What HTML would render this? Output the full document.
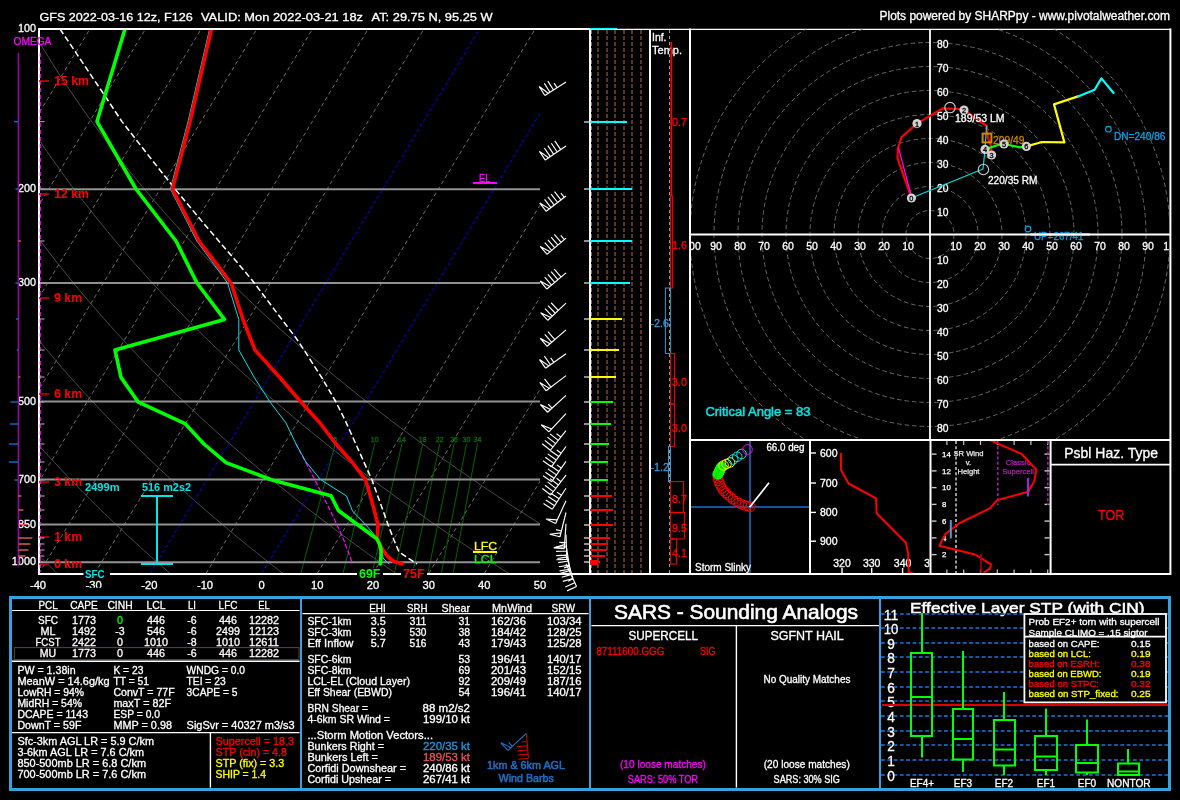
<!DOCTYPE html>
<html><head><meta charset="utf-8"><title>SHARPpy sounding</title>
<style>html,body{margin:0;padding:0;background:#000;overflow:hidden}svg{display:block;will-change:transform}text{font-family:"Liberation Sans",sans-serif}</style></head><body>
<svg width="1180" height="800" viewBox="0 0 1180 800">
<rect width="1180" height="800" fill="#000"/>
<text x="39.4" y="20.7" font-size="11.6" fill="#fff" textLength="153.4" lengthAdjust="spacingAndGlyphs" stroke="#fff" stroke-width="0.3">GFS 2022-03-16 12z, F126</text>
<text x="201.0" y="20.7" font-size="11.6" fill="#fff" textLength="162.0" lengthAdjust="spacingAndGlyphs" stroke="#fff" stroke-width="0.3">VALID: Mon 2022-03-21 18z</text>
<text x="371.6" y="20.7" font-size="11.6" fill="#fff" textLength="121.0" lengthAdjust="spacingAndGlyphs" stroke="#fff" stroke-width="0.3">AT: 29.75 N, 95.25 W</text>
<text x="879.5" y="19.7" font-size="12" fill="#fff" textLength="290.5" lengthAdjust="spacingAndGlyphs" stroke="#fff" stroke-width="0.3">Plots powered by SHARPpy - www.pivotalweather.com</text>
<clipPath id="cs"><rect x="39" y="29" width="501" height="545"/></clipPath>
<g clip-path="url(#cs)">
<path d="M57.2,573.5 L55.0,571.3 L52.7,569.0 L50.4,566.8 L48.1,564.5 L45.8,562.2 L43.5,559.9 L41.2,557.5 L38.9,555.1 L36.5,552.7 L34.1,550.3 L31.8,547.9 L29.4,545.4 L27.0,542.9 L24.5,540.3 L22.1,537.8 L19.7,535.2 L17.2,532.6 L14.7,529.9 L12.2,527.2 L9.7,524.5 L7.2,521.8 L4.7,519.0 L2.1,516.2 L-0.5,513.4 L-3.1,510.5 L-5.7,507.6 L-8.3,504.6 L-10.9,501.6 L-13.6,498.6 L-16.3,495.5 L-19.0,492.4 L-21.7,489.2 L-24.4,486.1 L-27.2,482.8 L-29.9,479.5 L-32.7,476.2 L-35.5,472.8 L-38.4,469.4 L-41.2,465.9 L-44.1,462.3 L-47.0,458.8 L-49.9,455.1 L-52.9,451.4 L-55.8,447.6 L-58.8,443.8 L-61.8,439.9 L-64.9,435.9 L-68.0,431.9 L-71.0,427.8 L-74.2,423.6 L-77.3,419.4 L-80.5,415.0 L-83.7,410.6 L-86.9,406.1 L-90.2,401.5 L-93.5,396.9 L-96.8,392.1 L-100.2,387.2 L-103.6,382.2 L-107.0,377.1 L-110.5,371.9 L-114.0,366.6 L-117.5,361.1 L-121.1,355.5 L-124.7,349.8 L-128.3,343.9 L-132.0,337.9 L-135.8,331.7 L-139.6,325.4 L-143.4,318.9 L-147.2,312.1 L-151.2,305.2 L-155.1,298.1 L-159.1,290.7 L-163.2,283.1 L-167.3,275.3 L-171.5,267.1 L-175.7,258.7 L-180.0,250.0 L-184.4,240.9 L-188.8,231.4 L-193.2,221.6 L-197.8,211.2 L-202.4,200.5 L-207.0,189.2 L-211.8,177.3 L-216.6,164.7 L-221.4,151.5 L-226.4,137.4 L-231.4,122.5 L-236.4,106.5 L-241.6,89.3 L-246.7,70.8 L-251.9,50.6 L-257.1,28.5" fill="none" stroke="#505050" stroke-width="0.9"/>
<path d="M170.1,573.5 L167.6,571.3 L165.0,569.0 L162.4,566.8 L159.8,564.5 L157.2,562.2 L154.5,559.9 L151.9,557.5 L149.2,555.1 L146.6,552.7 L143.9,550.3 L141.1,547.9 L138.4,545.4 L135.7,542.9 L132.9,540.3 L130.1,537.8 L127.4,535.2 L124.5,532.6 L121.7,529.9 L118.9,527.2 L116.0,524.5 L113.1,521.8 L110.2,519.0 L107.3,516.2 L104.4,513.4 L101.4,510.5 L98.4,507.6 L95.4,504.6 L92.4,501.6 L89.4,498.6 L86.3,495.5 L83.2,492.4 L80.1,489.2 L77.0,486.1 L73.8,482.8 L70.6,479.5 L67.4,476.2 L64.2,472.8 L60.9,469.4 L57.7,465.9 L54.3,462.3 L51.0,458.8 L47.6,455.1 L44.3,451.4 L40.8,447.6 L37.4,443.8 L33.9,439.9 L30.4,435.9 L26.9,431.9 L23.3,427.8 L19.7,423.6 L16.0,419.4 L12.4,415.0 L8.7,410.6 L4.9,406.1 L1.1,401.5 L-2.7,396.9 L-6.6,392.1 L-10.5,387.2 L-14.4,382.2 L-18.4,377.1 L-22.4,371.9 L-26.5,366.6 L-30.6,361.1 L-34.8,355.5 L-39.0,349.8 L-43.3,343.9 L-47.6,337.9 L-52.0,331.7 L-56.4,325.4 L-60.9,318.9 L-65.4,312.1 L-70.1,305.2 L-74.7,298.1 L-79.5,290.7 L-84.3,283.1 L-89.2,275.3 L-94.1,267.1 L-99.1,258.7 L-104.2,250.0 L-109.4,240.9 L-114.7,231.4 L-120.1,221.6 L-125.5,211.2 L-131.1,200.5 L-136.7,189.2 L-142.5,177.3 L-148.4,164.7 L-154.3,151.5 L-160.4,137.4 L-166.6,122.5 L-173.0,106.5 L-179.4,89.3 L-186.0,70.8 L-192.7,50.6 L-199.5,28.5" fill="none" stroke="#505050" stroke-width="0.9"/>
<path d="M283.0,573.5 L280.1,571.3 L277.3,569.0 L274.4,566.8 L271.4,564.5 L268.5,562.2 L265.6,559.9 L262.6,557.5 L259.6,555.1 L256.6,552.7 L253.6,550.3 L250.5,547.9 L247.5,545.4 L244.4,542.9 L241.3,540.3 L238.2,537.8 L235.0,535.2 L231.9,532.6 L228.7,529.9 L225.5,527.2 L222.3,524.5 L219.0,521.8 L215.8,519.0 L212.5,516.2 L209.2,513.4 L205.9,510.5 L202.5,507.6 L199.1,504.6 L195.7,501.6 L192.3,498.6 L188.8,495.5 L185.4,492.4 L181.9,489.2 L178.3,486.1 L174.8,482.8 L171.2,479.5 L167.6,476.2 L163.9,472.8 L160.2,469.4 L156.5,465.9 L152.8,462.3 L149.0,458.8 L145.2,455.1 L141.4,451.4 L137.5,447.6 L133.6,443.8 L129.7,439.9 L125.7,435.9 L121.7,431.9 L117.6,427.8 L113.5,423.6 L109.4,419.4 L105.2,415.0 L101.0,410.6 L96.8,406.1 L92.5,401.5 L88.1,396.9 L83.7,392.1 L79.3,387.2 L74.8,382.2 L70.2,377.1 L65.6,371.9 L61.0,366.6 L56.3,361.1 L51.5,355.5 L46.7,349.8 L41.8,343.9 L36.8,337.9 L31.8,331.7 L26.7,325.4 L21.6,318.9 L16.4,312.1 L11.1,305.2 L5.7,298.1 L0.2,290.7 L-5.3,283.1 L-11.0,275.3 L-16.7,267.1 L-22.5,258.7 L-28.5,250.0 L-34.5,240.9 L-40.7,231.4 L-46.9,221.6 L-53.3,211.2 L-59.8,200.5 L-66.4,189.2 L-73.2,177.3 L-80.1,164.7 L-87.2,151.5 L-94.5,137.4 L-101.9,122.5 L-109.5,106.5 L-117.3,89.3 L-125.2,70.8 L-133.4,50.6 L-141.8,28.5" fill="none" stroke="#505050" stroke-width="0.9"/>
<path d="M395.9,573.5 L392.7,571.3 L389.5,569.0 L386.3,566.8 L383.1,564.5 L379.8,562.2 L376.6,559.9 L373.3,557.5 L370.0,555.1 L366.6,552.7 L363.3,550.3 L359.9,547.9 L356.5,545.4 L353.1,542.9 L349.7,540.3 L346.2,537.8 L342.7,535.2 L339.2,532.6 L335.7,529.9 L332.1,527.2 L328.6,524.5 L325.0,521.8 L321.3,519.0 L317.7,516.2 L314.0,513.4 L310.3,510.5 L306.6,507.6 L302.8,504.6 L299.0,501.6 L295.2,498.6 L291.4,495.5 L287.5,492.4 L283.6,489.2 L279.7,486.1 L275.7,482.8 L271.7,479.5 L267.7,476.2 L263.6,472.8 L259.5,469.4 L255.4,465.9 L251.2,462.3 L247.0,458.8 L242.8,455.1 L238.5,451.4 L234.2,447.6 L229.8,443.8 L225.4,439.9 L221.0,435.9 L216.5,431.9 L212.0,427.8 L207.4,423.6 L202.8,419.4 L198.1,415.0 L193.4,410.6 L188.6,406.1 L183.8,401.5 L178.9,396.9 L174.0,392.1 L169.0,387.2 L164.0,382.2 L158.9,377.1 L153.7,371.9 L148.5,366.6 L143.2,361.1 L137.8,355.5 L132.4,349.8 L126.9,343.9 L121.3,337.9 L115.6,331.7 L109.9,325.4 L104.1,318.9 L98.2,312.1 L92.2,305.2 L86.1,298.1 L79.9,290.7 L73.6,283.1 L67.2,275.3 L60.7,267.1 L54.0,258.7 L47.3,250.0 L40.4,240.9 L33.4,231.4 L26.2,221.6 L18.9,211.2 L11.5,200.5 L3.9,189.2 L-3.9,177.3 L-11.9,164.7 L-20.1,151.5 L-28.5,137.4 L-37.1,122.5 L-46.0,106.5 L-55.1,89.3 L-64.5,70.8 L-74.1,50.6 L-84.1,28.5" fill="none" stroke="#505050" stroke-width="0.9"/>
<path d="M508.8,573.5 L505.3,571.3 L501.8,569.0 L498.3,566.8 L494.7,564.5 L491.2,562.2 L487.6,559.9 L484.0,557.5 L480.3,555.1 L476.7,552.7 L473.0,550.3 L469.3,547.9 L465.6,545.4 L461.8,542.9 L458.0,540.3 L454.2,537.8 L450.4,535.2 L446.6,532.6 L442.7,529.9 L438.8,527.2 L434.9,524.5 L430.9,521.8 L426.9,519.0 L422.9,516.2 L418.8,513.4 L414.8,510.5 L410.7,507.6 L406.5,504.6 L402.4,501.6 L398.2,498.6 L393.9,495.5 L389.7,492.4 L385.4,489.2 L381.0,486.1 L376.7,482.8 L372.3,479.5 L367.8,476.2 L363.3,472.8 L358.8,469.4 L354.3,465.9 L349.7,462.3 L345.0,458.8 L340.3,455.1 L335.6,451.4 L330.8,447.6 L326.0,443.8 L321.2,439.9 L316.3,435.9 L311.3,431.9 L306.3,427.8 L301.2,423.6 L296.1,419.4 L291.0,415.0 L285.7,410.6 L280.5,406.1 L275.1,401.5 L269.7,396.9 L264.3,392.1 L258.7,387.2 L253.1,382.2 L247.5,377.1 L241.7,371.9 L235.9,366.6 L230.1,361.1 L224.1,355.5 L218.1,349.8 L211.9,343.9 L205.7,337.9 L199.4,331.7 L193.0,325.4 L186.6,318.9 L180.0,312.1 L173.3,305.2 L166.5,298.1 L159.5,290.7 L152.5,283.1 L145.3,275.3 L138.1,267.1 L130.6,258.7 L123.1,250.0 L115.3,240.9 L107.5,231.4 L99.4,221.6 L91.2,211.2 L82.8,200.5 L74.1,189.2 L65.3,177.3 L56.3,164.7 L47.0,151.5 L37.4,137.4 L27.6,122.5 L17.5,106.5 L7.1,89.3 L-3.7,70.8 L-14.9,50.6 L-26.5,28.5" fill="none" stroke="#505050" stroke-width="0.9"/>
<path d="M621.7,573.5 L617.9,571.3 L614.1,569.0 L610.3,566.8 L606.4,564.5 L602.5,562.2 L598.6,559.9 L594.7,557.5 L590.7,555.1 L586.7,552.7 L582.7,550.3 L578.7,547.9 L574.6,545.4 L570.5,542.9 L566.4,540.3 L562.3,537.8 L558.1,535.2 L553.9,532.6 L549.7,529.9 L545.4,527.2 L541.1,524.5 L536.8,521.8 L532.5,519.0 L528.1,516.2 L523.7,513.4 L519.2,510.5 L514.8,507.6 L510.2,504.6 L505.7,501.6 L501.1,498.6 L496.5,495.5 L491.8,492.4 L487.1,489.2 L482.4,486.1 L477.6,482.8 L472.8,479.5 L468.0,476.2 L463.1,472.8 L458.1,469.4 L453.1,465.9 L448.1,462.3 L443.0,458.8 L437.9,455.1 L432.7,451.4 L427.5,447.6 L422.2,443.8 L416.9,439.9 L411.6,435.9 L406.1,431.9 L400.6,427.8 L395.1,423.6 L389.5,419.4 L383.8,415.0 L378.1,410.6 L372.3,406.1 L366.4,401.5 L360.5,396.9 L354.5,392.1 L348.5,387.2 L342.3,382.2 L336.1,377.1 L329.8,371.9 L323.4,366.6 L317.0,361.1 L310.4,355.5 L303.8,349.8 L297.0,343.9 L290.2,337.9 L283.2,331.7 L276.2,325.4 L269.0,318.9 L261.8,312.1 L254.4,305.2 L246.9,298.1 L239.2,290.7 L231.4,283.1 L223.5,275.3 L215.4,267.1 L207.2,258.7 L198.8,250.0 L190.3,240.9 L181.5,231.4 L172.6,221.6 L163.4,211.2 L154.0,200.5 L144.4,189.2 L134.6,177.3 L124.5,164.7 L114.1,151.5 L103.4,137.4 L92.4,122.5 L81.0,106.5 L69.2,89.3 L57.0,70.8 L44.4,50.6 L31.2,28.5" fill="none" stroke="#505050" stroke-width="0.9"/>
<line x1="-629.0" y1="573.5" x2="-299.5" y2="28.5" stroke="#6a6a6a" stroke-width="1" stroke-dasharray="4 3"/>
<line x1="-573.3" y1="573.5" x2="-243.8" y2="28.5" stroke="#6a6a6a" stroke-width="1" stroke-dasharray="4 3"/>
<line x1="-517.7" y1="573.5" x2="-188.2" y2="28.5" stroke="#6a6a6a" stroke-width="1" stroke-dasharray="4 3"/>
<line x1="-462.0" y1="573.5" x2="-132.5" y2="28.5" stroke="#6a6a6a" stroke-width="1" stroke-dasharray="4 3"/>
<line x1="-406.3" y1="573.5" x2="-76.8" y2="28.5" stroke="#6a6a6a" stroke-width="1" stroke-dasharray="4 3"/>
<line x1="-350.7" y1="573.5" x2="-21.2" y2="28.5" stroke="#6a6a6a" stroke-width="1" stroke-dasharray="4 3"/>
<line x1="-295.0" y1="573.5" x2="34.5" y2="28.5" stroke="#6a6a6a" stroke-width="1" stroke-dasharray="4 3"/>
<line x1="-239.3" y1="573.5" x2="90.2" y2="28.5" stroke="#6a6a6a" stroke-width="1" stroke-dasharray="4 3"/>
<line x1="-183.7" y1="573.5" x2="145.8" y2="28.5" stroke="#6a6a6a" stroke-width="1" stroke-dasharray="4 3"/>
<line x1="-128.0" y1="573.5" x2="201.5" y2="28.5" stroke="#6a6a6a" stroke-width="1" stroke-dasharray="4 3"/>
<line x1="-72.3" y1="573.5" x2="257.2" y2="28.5" stroke="#6a6a6a" stroke-width="1" stroke-dasharray="4 3"/>
<line x1="-16.7" y1="573.5" x2="312.8" y2="28.5" stroke="#6a6a6a" stroke-width="1" stroke-dasharray="4 3"/>
<line x1="39.0" y1="573.5" x2="368.5" y2="28.5" stroke="#6a6a6a" stroke-width="1" stroke-dasharray="4 3"/>
<line x1="94.7" y1="573.5" x2="424.2" y2="28.5" stroke="#6a6a6a" stroke-width="1" stroke-dasharray="4 3"/>
<line x1="150.3" y1="573.5" x2="479.8" y2="28.5" stroke="#0000ff" stroke-width="1" stroke-dasharray="3.5 2.5"/>
<line x1="206.0" y1="573.5" x2="535.5" y2="28.5" stroke="#6a6a6a" stroke-width="1" stroke-dasharray="4 3"/>
<line x1="261.7" y1="573.5" x2="591.2" y2="28.5" stroke="#0000ff" stroke-width="1" stroke-dasharray="3.5 2.5"/>
<line x1="317.3" y1="573.5" x2="646.8" y2="28.5" stroke="#6a6a6a" stroke-width="1" stroke-dasharray="4 3"/>
<line x1="373.0" y1="573.5" x2="702.5" y2="28.5" stroke="#6a6a6a" stroke-width="1" stroke-dasharray="4 3"/>
<line x1="428.7" y1="573.5" x2="758.2" y2="28.5" stroke="#6a6a6a" stroke-width="1" stroke-dasharray="4 3"/>
<line x1="484.3" y1="573.5" x2="813.8" y2="28.5" stroke="#6a6a6a" stroke-width="1" stroke-dasharray="4 3"/>
<line x1="540.0" y1="573.5" x2="869.5" y2="28.5" stroke="#6a6a6a" stroke-width="1" stroke-dasharray="4 3"/>
</g>
<line x1="300.8" y1="573.5" x2="335.2" y2="443.8" stroke="#006400" stroke-width="1"/>
<text x="335.2" y="441.8" font-size="7" fill="#007000" text-anchor="middle" stroke="#007000" stroke-width="0.3">6</text>
<line x1="343.0" y1="573.5" x2="374.7" y2="443.8" stroke="#006400" stroke-width="1"/>
<text x="374.7" y="441.8" font-size="7" fill="#007000" text-anchor="middle" stroke="#007000" stroke-width="0.3">10</text>
<line x1="372.0" y1="573.5" x2="401.9" y2="443.8" stroke="#006400" stroke-width="1"/>
<text x="401.9" y="441.8" font-size="7" fill="#007000" text-anchor="middle" stroke="#007000" stroke-width="0.3">14</text>
<line x1="394.3" y1="573.5" x2="422.7" y2="443.8" stroke="#006400" stroke-width="1"/>
<text x="422.7" y="441.8" font-size="7" fill="#007000" text-anchor="middle" stroke="#007000" stroke-width="0.3">18</text>
<line x1="412.5" y1="573.5" x2="439.7" y2="443.8" stroke="#006400" stroke-width="1"/>
<text x="439.7" y="441.8" font-size="7" fill="#007000" text-anchor="middle" stroke="#007000" stroke-width="0.3">22</text>
<line x1="427.9" y1="573.5" x2="454.1" y2="443.8" stroke="#006400" stroke-width="1"/>
<text x="454.1" y="441.8" font-size="7" fill="#007000" text-anchor="middle" stroke="#007000" stroke-width="0.3">26</text>
<line x1="441.3" y1="573.5" x2="466.5" y2="443.8" stroke="#006400" stroke-width="1"/>
<text x="466.5" y="441.8" font-size="7" fill="#007000" text-anchor="middle" stroke="#007000" stroke-width="0.3">30</text>
<line x1="453.1" y1="573.5" x2="477.5" y2="443.8" stroke="#006400" stroke-width="1"/>
<text x="477.5" y="441.8" font-size="7" fill="#007000" text-anchor="middle" stroke="#007000" stroke-width="0.3">34</text>
<line x1="39.0" y1="562.2" x2="540.0" y2="562.2" stroke="#929292" stroke-width="2"/>
<line x1="39.0" y1="524.5" x2="540.0" y2="524.5" stroke="#929292" stroke-width="2"/>
<line x1="39.0" y1="479.5" x2="540.0" y2="479.5" stroke="#929292" stroke-width="2"/>
<line x1="39.0" y1="401.5" x2="540.0" y2="401.5" stroke="#929292" stroke-width="2"/>
<line x1="39.0" y1="283.1" x2="540.0" y2="283.1" stroke="#929292" stroke-width="2"/>
<line x1="39.0" y1="189.2" x2="540.0" y2="189.2" stroke="#929292" stroke-width="2"/>
<g clip-path="url(#cs)" stroke-linejoin="round" stroke-linecap="round">
<path d="M296.0,444.0 L306.0,463.0 L315.0,480.0 L323.0,496.0 L330.0,510.0 L337.0,525.0 L343.0,538.0 L352.0,562.0" fill="none" stroke="#ff00ff" stroke-width="1.2" stroke-dasharray="4 3"/>
<path d="M209.6,29.0 L188.0,121.6 L170.4,189.0 L196.8,241.0 L227.6,283.0 L238.8,319.5 L238.8,350.0 L254.0,377.0 L270.0,402.0 L286.0,423.0 L296.0,444.0 L306.0,462.0 L320.5,479.5 L346.5,496.0 L352.5,511.0 L366.0,525.0 L377.0,538.0 L379.5,544.0 L381.0,550.0 L383.0,558.0 L389.0,564.0" fill="none" stroke="#00e5e5" stroke-width="1"/>
<path d="M60.0,29.0 L105.0,96.0 L122.0,121.6 L152.0,160.0 L175.0,189.0 L205.0,225.0 L236.0,261.0 L252.0,280.0 L277.0,313.0 L296.0,338.0 L304.0,350.0 L322.0,378.0 L336.0,402.0 L345.0,420.0 L354.0,440.0 L363.0,460.0 L372.0,480.0 L381.0,505.0 L388.0,524.6 L394.0,540.0 L399.0,552.0 L417.0,564.0" fill="none" stroke="#fff" stroke-width="1.5" stroke-dasharray="6 3" stroke-linecap="butt"/>
<path d="M211.4,29.0 L190.0,121.6 L172.4,189.0 L199.0,241.0 L231.0,283.0 L243.0,319.5 L255.0,350.0 L279.4,377.0 L301.0,402.0 L320.0,423.0 L336.0,444.0 L352.0,462.0 L365.6,480.0 L370.3,496.0 L374.2,510.0 L378.0,525.0 L377.2,538.0 L379.5,544.0 L383.0,550.0 L387.5,556.5 L394.0,561.5 L402.0,563.8" fill="none" stroke="#ff0000" stroke-width="3.6"/>
<path d="M125.0,29.0 L97.0,121.6 L136.0,189.0 L176.0,241.0 L197.0,283.0 L224.4,319.4 L115.0,350.0 L121.0,377.4 L138.0,401.8 L185.0,423.6 L204.0,444.0 L226.0,462.6 L272.0,480.0 L331.0,495.8 L338.4,510.5 L358.0,525.0 L376.5,538.5 L379.5,544.0 L381.0,550.0 L381.0,556.0 L380.5,562.0 L380.4,564.0" fill="none" stroke="#00ff00" stroke-width="3.6"/>
</g>
<line x1="38.0" y1="29.0" x2="590.8" y2="29.0" stroke="#fff" stroke-width="2"/>
<line x1="39.0" y1="28.0" x2="39.0" y2="575.0" stroke="#fff" stroke-width="2"/>
<line x1="38.0" y1="574.0" x2="590.8" y2="574.0" stroke="#fff" stroke-width="2"/>
<line x1="590.0" y1="28.0" x2="590.0" y2="575.0" stroke="#fff" stroke-width="2"/>
<line x1="590.0" y1="29.4" x2="1171.0" y2="29.4" stroke="#fff" stroke-width="1.3"/>
<line x1="590.0" y1="28.6" x2="617.0" y2="28.6" stroke="#00ffff" stroke-width="1.4"/>
<text x="36.0" y="31.6" font-size="11.3" fill="#fff" text-anchor="end" textLength="18.0" lengthAdjust="spacingAndGlyphs" stroke="#fff" stroke-width="0.3">100</text>
<text x="36.0" y="192.3" font-size="11.3" fill="#fff" text-anchor="end" textLength="18.0" lengthAdjust="spacingAndGlyphs" stroke="#fff" stroke-width="0.3">200</text>
<text x="36.0" y="286.2" font-size="11.3" fill="#fff" text-anchor="end" textLength="18.0" lengthAdjust="spacingAndGlyphs" stroke="#fff" stroke-width="0.3">300</text>
<text x="36.0" y="404.6" font-size="11.3" fill="#fff" text-anchor="end" textLength="18.0" lengthAdjust="spacingAndGlyphs" stroke="#fff" stroke-width="0.3">500</text>
<text x="36.0" y="482.6" font-size="11.3" fill="#fff" text-anchor="end" textLength="18.0" lengthAdjust="spacingAndGlyphs" stroke="#fff" stroke-width="0.3">700</text>
<text x="36.0" y="527.6" font-size="11.3" fill="#fff" text-anchor="end" textLength="18.0" lengthAdjust="spacingAndGlyphs" stroke="#fff" stroke-width="0.3">850</text>
<text x="36.0" y="565.3" font-size="11.3" fill="#fff" text-anchor="end" textLength="24.2" lengthAdjust="spacingAndGlyphs" stroke="#fff" stroke-width="0.3">1000</text>
<clipPath id="c30"><rect x="80" y="575" width="32" height="12.7"/></clipPath>
<text x="38.0" y="588.9" font-size="11.2" fill="#fff" text-anchor="middle" stroke="#fff" stroke-width="0.3">-40</text>
<text x="93.7" y="588.9" font-size="11.2" fill="#fff" text-anchor="middle" stroke="#fff" stroke-width="0.3" clip-path="url(#c30)">-30</text>
<text x="149.3" y="588.9" font-size="11.2" fill="#fff" text-anchor="middle" stroke="#fff" stroke-width="0.3">-20</text>
<text x="205.0" y="588.9" font-size="11.2" fill="#fff" text-anchor="middle" stroke="#fff" stroke-width="0.3">-10</text>
<text x="261.7" y="588.9" font-size="11.2" fill="#fff" text-anchor="middle" stroke="#fff" stroke-width="0.3">0</text>
<text x="317.3" y="588.9" font-size="11.2" fill="#fff" text-anchor="middle" stroke="#fff" stroke-width="0.3">10</text>
<text x="373.0" y="588.9" font-size="11.2" fill="#fff" text-anchor="middle" stroke="#fff" stroke-width="0.3">20</text>
<text x="428.7" y="588.9" font-size="11.2" fill="#fff" text-anchor="middle" stroke="#fff" stroke-width="0.3">30</text>
<text x="484.3" y="588.9" font-size="11.2" fill="#fff" text-anchor="middle" stroke="#fff" stroke-width="0.3">40</text>
<text x="540.0" y="588.9" font-size="11.2" fill="#fff" text-anchor="middle" stroke="#fff" stroke-width="0.3">50</text>
<line x1="39.0" y1="81.0" x2="49.0" y2="81.0" stroke="#d00000" stroke-width="1.6"/>
<text x="54.2" y="85.3" font-size="12.4" fill="#ff0000" font-weight="bold" textLength="34.8" lengthAdjust="spacingAndGlyphs">15 km</text>
<line x1="39.0" y1="194.0" x2="49.0" y2="194.0" stroke="#d00000" stroke-width="1.6"/>
<text x="54.2" y="198.3" font-size="12.4" fill="#ff0000" font-weight="bold" textLength="34.8" lengthAdjust="spacingAndGlyphs">12 km</text>
<line x1="39.0" y1="298.0" x2="49.0" y2="298.0" stroke="#d00000" stroke-width="1.6"/>
<text x="54.2" y="302.3" font-size="12.4" fill="#ff0000" font-weight="bold" textLength="27.8" lengthAdjust="spacingAndGlyphs">9 km</text>
<line x1="39.0" y1="394.0" x2="49.0" y2="394.0" stroke="#d00000" stroke-width="1.6"/>
<text x="54.2" y="398.3" font-size="12.4" fill="#ff0000" font-weight="bold" textLength="27.8" lengthAdjust="spacingAndGlyphs">6 km</text>
<line x1="39.0" y1="482.0" x2="49.0" y2="482.0" stroke="#d00000" stroke-width="1.6"/>
<text x="54.2" y="486.3" font-size="12.4" fill="#ff0000" font-weight="bold" textLength="27.8" lengthAdjust="spacingAndGlyphs">3 km</text>
<line x1="39.0" y1="537.0" x2="49.0" y2="537.0" stroke="#d00000" stroke-width="1.6"/>
<text x="54.2" y="541.3" font-size="12.4" fill="#ff0000" font-weight="bold" textLength="27.8" lengthAdjust="spacingAndGlyphs">1 km</text>
<line x1="39.0" y1="564.0" x2="49.0" y2="564.0" stroke="#d00000" stroke-width="1.6"/>
<text x="54.2" y="568.3" font-size="12.4" fill="#ff0000" font-weight="bold" textLength="27.8" lengthAdjust="spacingAndGlyphs">0 km</text>
<text x="13.6" y="45.1" font-size="11.3" fill="#ff00ff" textLength="37.8" lengthAdjust="spacingAndGlyphs" stroke="#ff00ff" stroke-width="0.3">OMEGA</text>
<line x1="18.4" y1="53.0" x2="18.4" y2="566.0" stroke="#a000a0" stroke-width="1.6"/>
<line x1="40.3" y1="53.0" x2="40.3" y2="572.0" stroke="#ff00ff" stroke-width="1.2" stroke-dasharray="4 3"/>
<line x1="40.0" y1="121.6" x2="44.5" y2="121.6" stroke="#9a9a9a" stroke-width="1.2"/>
<line x1="18.4" y1="121.6" x2="13.9" y2="121.6" stroke="#0a6fd0" stroke-width="1.4"/>
<line x1="40.0" y1="189.0" x2="44.5" y2="189.0" stroke="#9a9a9a" stroke-width="1.2"/>
<line x1="18.4" y1="189.0" x2="15.4" y2="189.0" stroke="#0a6fd0" stroke-width="1.4"/>
<line x1="40.0" y1="241.0" x2="44.5" y2="241.0" stroke="#9a9a9a" stroke-width="1.2"/>
<line x1="18.4" y1="241.0" x2="20.9" y2="241.0" stroke="#e06060" stroke-width="1.4"/>
<line x1="40.0" y1="283.0" x2="44.5" y2="283.0" stroke="#9a9a9a" stroke-width="1.2"/>
<line x1="18.4" y1="283.0" x2="15.4" y2="283.0" stroke="#0a6fd0" stroke-width="1.4"/>
<line x1="40.0" y1="319.0" x2="44.5" y2="319.0" stroke="#9a9a9a" stroke-width="1.2"/>
<line x1="18.4" y1="319.0" x2="15.9" y2="319.0" stroke="#0a6fd0" stroke-width="1.4"/>
<line x1="40.0" y1="350.0" x2="44.5" y2="350.0" stroke="#9a9a9a" stroke-width="1.2"/>
<line x1="18.4" y1="350.0" x2="16.9" y2="350.0" stroke="#0a6fd0" stroke-width="1.4"/>
<line x1="40.0" y1="377.0" x2="44.5" y2="377.0" stroke="#9a9a9a" stroke-width="1.2"/>
<line x1="18.4" y1="377.0" x2="20.4" y2="377.0" stroke="#e06060" stroke-width="1.4"/>
<line x1="40.0" y1="402.0" x2="44.5" y2="402.0" stroke="#9a9a9a" stroke-width="1.2"/>
<line x1="18.4" y1="402.0" x2="10.4" y2="402.0" stroke="#0a6fd0" stroke-width="1.4"/>
<line x1="40.0" y1="424.0" x2="44.5" y2="424.0" stroke="#9a9a9a" stroke-width="1.2"/>
<line x1="18.4" y1="424.0" x2="9.9" y2="424.0" stroke="#0a6fd0" stroke-width="1.4"/>
<line x1="40.0" y1="444.0" x2="44.5" y2="444.0" stroke="#9a9a9a" stroke-width="1.2"/>
<line x1="18.4" y1="444.0" x2="8.9" y2="444.0" stroke="#0a6fd0" stroke-width="1.4"/>
<line x1="40.0" y1="462.0" x2="44.5" y2="462.0" stroke="#9a9a9a" stroke-width="1.2"/>
<line x1="18.4" y1="462.0" x2="8.9" y2="462.0" stroke="#0a6fd0" stroke-width="1.4"/>
<line x1="40.0" y1="480.0" x2="44.5" y2="480.0" stroke="#9a9a9a" stroke-width="1.2"/>
<line x1="18.4" y1="480.0" x2="14.4" y2="480.0" stroke="#0a6fd0" stroke-width="1.4"/>
<line x1="40.0" y1="496.0" x2="44.5" y2="496.0" stroke="#9a9a9a" stroke-width="1.2"/>
<line x1="18.4" y1="496.0" x2="21.4" y2="496.0" stroke="#e06060" stroke-width="1.4"/>
<line x1="40.0" y1="510.0" x2="44.5" y2="510.0" stroke="#9a9a9a" stroke-width="1.2"/>
<line x1="18.4" y1="510.0" x2="23.4" y2="510.0" stroke="#e06060" stroke-width="1.4"/>
<line x1="40.0" y1="524.6" x2="44.5" y2="524.6" stroke="#9a9a9a" stroke-width="1.2"/>
<line x1="18.4" y1="524.6" x2="27.4" y2="524.6" stroke="#e06060" stroke-width="1.4"/>
<line x1="40.0" y1="538.0" x2="44.5" y2="538.0" stroke="#9a9a9a" stroke-width="1.2"/>
<line x1="18.4" y1="538.0" x2="32.4" y2="538.0" stroke="#e06060" stroke-width="1.4"/>
<line x1="40.0" y1="544.0" x2="44.5" y2="544.0" stroke="#9a9a9a" stroke-width="1.2"/>
<line x1="18.4" y1="544.0" x2="30.4" y2="544.0" stroke="#e06060" stroke-width="1.4"/>
<line x1="40.0" y1="550.0" x2="44.5" y2="550.0" stroke="#9a9a9a" stroke-width="1.2"/>
<line x1="18.4" y1="550.0" x2="28.4" y2="550.0" stroke="#e06060" stroke-width="1.4"/>
<line x1="40.0" y1="556.0" x2="44.5" y2="556.0" stroke="#9a9a9a" stroke-width="1.2"/>
<line x1="18.4" y1="556.0" x2="25.4" y2="556.0" stroke="#e06060" stroke-width="1.4"/>
<line x1="40.0" y1="562.0" x2="44.5" y2="562.0" stroke="#9a9a9a" stroke-width="1.2"/>
<line x1="18.4" y1="562.0" x2="20.4" y2="562.0" stroke="#e06060" stroke-width="1.4"/>
<line x1="141.0" y1="496.0" x2="173.0" y2="496.0" stroke="#00e5e5" stroke-width="2"/>
<line x1="141.0" y1="564.0" x2="173.0" y2="564.0" stroke="#00e5e5" stroke-width="2"/>
<line x1="157.0" y1="496.0" x2="157.0" y2="564.0" stroke="#00e5e5" stroke-width="2"/>
<text x="85.0" y="490.6" font-size="10" fill="#00e5e5" font-weight="bold" textLength="34.5" lengthAdjust="spacingAndGlyphs">2499m</text>
<text x="142.0" y="490.6" font-size="10" fill="#00e5e5" font-weight="bold" textLength="49.0" lengthAdjust="spacingAndGlyphs">516 m2s2</text>
<rect x="83.5" y="569.0" width="26.5" height="10.0" fill="#000" stroke="none" stroke-width="1"/>
<text x="85.0" y="577.6" font-size="10" fill="#00e5e5" font-weight="bold" textLength="19.5" lengthAdjust="spacingAndGlyphs">SFC</text>
<rect x="357.0" y="568.0" width="26.0" height="12.0" fill="#000" stroke="none" stroke-width="1"/>
<text x="359.0" y="577.8" font-size="12" fill="#00ff00" font-weight="bold" textLength="21.4" lengthAdjust="spacingAndGlyphs">69F</text>
<rect x="401.0" y="568.0" width="26.0" height="12.0" fill="#000" stroke="none" stroke-width="1"/>
<text x="403.0" y="577.8" font-size="12" fill="#ff0000" font-weight="bold" textLength="21.6" lengthAdjust="spacingAndGlyphs">75F</text>
<text x="479.0" y="182.0" font-size="10.4" fill="#ff00ff" textLength="11.5" lengthAdjust="spacingAndGlyphs" stroke="#ff00ff" stroke-width="0.3">EL</text>
<line x1="473.0" y1="183.0" x2="497.0" y2="183.0" stroke="#ff00ff" stroke-width="2"/>
<text x="474.0" y="550.0" font-size="11" fill="#ffff00" textLength="23.0" lengthAdjust="spacingAndGlyphs" stroke="#ffff00" stroke-width="0.3">LFC</text>
<line x1="473.0" y1="552.0" x2="497.0" y2="552.0" stroke="#ffff00" stroke-width="2"/>
<text x="474.0" y="563.0" font-size="11" fill="#00ff00" textLength="22.5" lengthAdjust="spacingAndGlyphs" stroke="#00ff00" stroke-width="0.3">LCL</text>
<path transform="translate(566.0,82.1) rotate(147.7)" d="M0,0 L25.0,0 M25.0,0 L25.0,10.5 L21.0,0 M19.0,0 L19.0,10.5 M14.8,0 L14.8,10.5 M10.6,0 L10.6,5.5" fill="none" stroke="#fff" stroke-width="1.15"/>
<path transform="translate(566.0,146.0) rotate(145.8)" d="M0,0 L25.0,0 M25.0,0 L25.0,10.5 L21.0,0 M19.0,0 L19.0,10.5 M14.8,0 L14.8,10.5 M10.6,0 L10.6,10.5 M6.4,0 L6.4,10.5" fill="none" stroke="#fff" stroke-width="1.15"/>
<path transform="translate(566.0,196.0) rotate(142.2)" d="M0,0 L25.0,0 M25.0,0 L25.0,10.5 L21.0,0 M19.0,0 L19.0,10.5 M14.8,0 L14.8,10.5 M10.6,0 L10.6,10.5 M6.4,0 L6.4,10.5 M2.2,0 L2.2,5.5" fill="none" stroke="#fff" stroke-width="1.15"/>
<path transform="translate(566.0,238.1) rotate(139.3)" d="M0,0 L25.0,0 M25.0,0 L25.0,10.5 L21.0,0 M19.0,0 L19.0,10.5 M14.8,0 L14.8,10.5 M10.6,0 L10.6,10.5 M6.4,0 L6.4,10.5 M2.2,0 L2.2,5.5" fill="none" stroke="#fff" stroke-width="1.15"/>
<path transform="translate(566.0,272.9) rotate(139.8)" d="M0,0 L25.0,0 M25.0,0 L25.0,10.5 L21.0,0 M19.0,0 L19.0,10.5 M14.8,0 L14.8,10.5 M10.6,0 L10.6,10.5 M6.4,0 L6.4,10.5" fill="none" stroke="#fff" stroke-width="1.15"/>
<path transform="translate(566.0,303.1) rotate(136.6)" d="M0,0 L25.0,0 M25.0,0 L25.0,10.5 L21.0,0 M19.0,0 L19.0,10.5 M14.8,0 L14.8,10.5 M10.6,0 L10.6,10.5" fill="none" stroke="#fff" stroke-width="1.15"/>
<path transform="translate(566.0,329.9) rotate(139.0)" d="M0,0 L25.0,0 M25.0,0 L25.0,10.5 L21.0,0 M19.0,0 L19.0,10.5 M14.8,0 L14.8,10.5" fill="none" stroke="#fff" stroke-width="1.15"/>
<path transform="translate(566.0,353.8) rotate(144.9)" d="M0,0 L25.0,0 M25.0,0 L25.0,10.5 L21.0,0 M19.0,0 L19.0,10.5 M14.8,0 L14.8,5.5" fill="none" stroke="#fff" stroke-width="1.15"/>
<path transform="translate(566.0,375.6) rotate(142.5)" d="M0,0 L25.0,0 M25.0,0 L25.0,10.5 L21.0,0 M19.0,0 L19.0,10.5" fill="none" stroke="#fff" stroke-width="1.15"/>
<path transform="translate(566.0,395.4) rotate(137.6)" d="M0,0 L25.0,0 M25.0,0 L25.0,10.5 L21.0,0 M19.0,0 L19.0,5.5" fill="none" stroke="#fff" stroke-width="1.15"/>
<path transform="translate(566.0,413.7) rotate(133.2)" d="M0,0 L25.0,0 M25.0,0 L25.0,10.5 L21.0,0" fill="none" stroke="#fff" stroke-width="1.15"/>
<path transform="translate(566.0,430.7) rotate(128.6)" d="M0,0 L25.0,0 M25.0,0 L25.0,10.5 M20.8,0 L20.8,10.5 M16.6,0 L16.6,10.5 M12.4,0 L12.4,10.5 M8.2,0 L8.2,5.5" fill="none" stroke="#fff" stroke-width="1.15"/>
<path transform="translate(566.0,446.5) rotate(125.7)" d="M0,0 L25.0,0 M25.0,0 L25.0,10.5 M20.8,0 L20.8,10.5 M16.6,0 L16.6,10.5 M12.4,0 L12.4,10.5 M8.2,0 L8.2,5.5" fill="none" stroke="#fff" stroke-width="1.15"/>
<path transform="translate(566.0,461.3) rotate(125.0)" d="M0,0 L25.0,0 M25.0,0 L25.0,10.5 M20.8,0 L20.8,10.5 M16.6,0 L16.6,10.5 M12.4,0 L12.4,10.5 M8.2,0 L8.2,5.5" fill="none" stroke="#fff" stroke-width="1.15"/>
<path transform="translate(566.0,475.2) rotate(127.7)" d="M0,0 L25.0,0 M25.0,0 L25.0,10.5 M20.8,0 L20.8,10.5 M16.6,0 L16.6,10.5 M12.4,0 L12.4,10.5 M8.2,0 L8.2,5.5" fill="none" stroke="#fff" stroke-width="1.15"/>
<path transform="translate(566.0,488.3) rotate(123.3)" d="M0,0 L25.0,0 M25.0,0 L25.0,10.5 M20.8,0 L20.8,10.5 M16.6,0 L16.6,10.5 M12.4,0 L12.4,10.5 M8.2,0 L8.2,5.5" fill="none" stroke="#fff" stroke-width="1.15"/>
<path transform="translate(566.0,500.7) rotate(114.5)" d="M0,0 L25.0,0 M25.0,0 L25.0,10.5 L21.0,0" fill="none" stroke="#fff" stroke-width="1.15"/>
<path transform="translate(566.0,512.5) rotate(104.0)" d="M0,0 L25.0,0 M25.0,0 L25.0,10.5 L21.0,0 M19.0,0 L19.0,5.5" fill="none" stroke="#fff" stroke-width="1.15"/>
<path transform="translate(566.0,523.7) rotate(94.0)" d="M0,0 L25.0,0 M25.0,0 L25.0,10.5 L21.0,0 M19.0,0 L19.0,5.5" fill="none" stroke="#fff" stroke-width="1.15"/>
<path transform="translate(566.0,534.4) rotate(88.0)" d="M0,0 L25.0,0 M25.0,0 L25.0,10.5 M20.8,0 L20.8,10.5 M16.6,0 L16.6,10.5 M12.4,0 L12.4,10.5 M8.2,0 L8.2,5.5" fill="none" stroke="#fff" stroke-width="1.15"/>
<path transform="translate(566.0,544.6) rotate(81.0)" d="M0,0 L25.0,0 M25.0,0 L25.0,10.5 M20.8,0 L20.8,10.5 M16.6,0 L16.6,10.5 M12.4,0 L12.4,10.5" fill="none" stroke="#fff" stroke-width="1.15"/>
<path transform="translate(566.0,554.4) rotate(74.0)" d="M0,0 L25.0,0 M25.0,0 L25.0,10.5 M20.8,0 L20.8,10.5 M16.6,0 L16.6,10.5 M12.4,0 L12.4,5.5" fill="none" stroke="#fff" stroke-width="1.15"/>
<path transform="translate(566.0,563.8) rotate(65.0)" d="M0,0 L25.0,0 M25.0,0 L25.0,10.5 M20.8,0 L20.8,10.5 M16.6,0 L16.6,5.5" fill="none" stroke="#fff" stroke-width="1.15"/>
<g shape-rendering="crispEdges">
<line x1="598.0" y1="30.0" x2="598.0" y2="573.0" stroke="#5c3621" stroke-width="2" stroke-dasharray="4 2"/>
<line x1="607.0" y1="30.0" x2="607.0" y2="573.0" stroke="#5c3621" stroke-width="2" stroke-dasharray="4 2"/>
<line x1="615.0" y1="30.0" x2="615.0" y2="573.0" stroke="#5c3621" stroke-width="2" stroke-dasharray="4 2"/>
<line x1="624.0" y1="30.0" x2="624.0" y2="573.0" stroke="#5c3621" stroke-width="2" stroke-dasharray="4 2"/>
<line x1="632.0" y1="30.0" x2="632.0" y2="573.0" stroke="#5c3621" stroke-width="2" stroke-dasharray="4 2"/>
<line x1="641.0" y1="30.0" x2="641.0" y2="573.0" stroke="#5c3621" stroke-width="2" stroke-dasharray="4 2"/>
<line x1="591.0" y1="30.0" x2="591.0" y2="573.0" stroke="#8f6250" stroke-width="1" stroke-dasharray="4 2"/>
<line x1="584.0" y1="122.0" x2="589.0" y2="122.0" stroke="#8e8e8e" stroke-width="2"/>
<line x1="590.0" y1="122.0" x2="627.0" y2="122.0" stroke="#00ffff" stroke-width="2"/>
<line x1="584.0" y1="189.0" x2="589.0" y2="189.0" stroke="#8e8e8e" stroke-width="2"/>
<line x1="590.0" y1="189.0" x2="632.0" y2="189.0" stroke="#00ffff" stroke-width="2"/>
<line x1="584.0" y1="241.0" x2="589.0" y2="241.0" stroke="#8e8e8e" stroke-width="2"/>
<line x1="590.0" y1="241.0" x2="632.0" y2="241.0" stroke="#00ffff" stroke-width="2"/>
<line x1="584.0" y1="283.0" x2="589.0" y2="283.0" stroke="#8e8e8e" stroke-width="2"/>
<line x1="590.0" y1="283.0" x2="630.0" y2="283.0" stroke="#00ffff" stroke-width="2"/>
<line x1="584.0" y1="319.0" x2="589.0" y2="319.0" stroke="#8e8e8e" stroke-width="2"/>
<line x1="590.0" y1="319.0" x2="622.0" y2="319.0" stroke="#ffff00" stroke-width="2"/>
<line x1="584.0" y1="350.0" x2="589.0" y2="350.0" stroke="#8e8e8e" stroke-width="2"/>
<line x1="590.0" y1="350.0" x2="619.0" y2="350.0" stroke="#ffff00" stroke-width="2"/>
<line x1="584.0" y1="377.0" x2="589.0" y2="377.0" stroke="#8e8e8e" stroke-width="2"/>
<line x1="590.0" y1="377.0" x2="616.0" y2="377.0" stroke="#ffff00" stroke-width="2"/>
<line x1="584.0" y1="402.0" x2="589.0" y2="402.0" stroke="#8e8e8e" stroke-width="2"/>
<line x1="590.0" y1="402.0" x2="613.0" y2="402.0" stroke="#00ff00" stroke-width="2"/>
<line x1="584.0" y1="424.0" x2="589.0" y2="424.0" stroke="#8e8e8e" stroke-width="2"/>
<line x1="590.0" y1="424.0" x2="611.0" y2="424.0" stroke="#00ff00" stroke-width="2"/>
<line x1="584.0" y1="444.0" x2="589.0" y2="444.0" stroke="#8e8e8e" stroke-width="2"/>
<line x1="590.0" y1="444.0" x2="609.0" y2="444.0" stroke="#00ff00" stroke-width="2"/>
<line x1="584.0" y1="462.0" x2="589.0" y2="462.0" stroke="#8e8e8e" stroke-width="2"/>
<line x1="590.0" y1="462.0" x2="608.0" y2="462.0" stroke="#00ff00" stroke-width="2"/>
<line x1="584.0" y1="480.0" x2="589.0" y2="480.0" stroke="#8e8e8e" stroke-width="2"/>
<line x1="590.0" y1="480.0" x2="608.0" y2="480.0" stroke="#00ff00" stroke-width="2"/>
<line x1="584.0" y1="496.0" x2="589.0" y2="496.0" stroke="#8e8e8e" stroke-width="2"/>
<line x1="590.0" y1="496.0" x2="612.0" y2="496.0" stroke="#ff0000" stroke-width="2"/>
<line x1="584.0" y1="510.0" x2="589.0" y2="510.0" stroke="#8e8e8e" stroke-width="2"/>
<line x1="590.0" y1="510.0" x2="613.0" y2="510.0" stroke="#ff0000" stroke-width="2"/>
<line x1="584.0" y1="525.0" x2="589.0" y2="525.0" stroke="#8e8e8e" stroke-width="2"/>
<line x1="590.0" y1="525.0" x2="613.0" y2="525.0" stroke="#ff0000" stroke-width="2"/>
<line x1="584.0" y1="538.0" x2="589.0" y2="538.0" stroke="#8e8e8e" stroke-width="2"/>
<line x1="590.0" y1="538.0" x2="610.0" y2="538.0" stroke="#ff0000" stroke-width="2"/>
<line x1="584.0" y1="544.0" x2="589.0" y2="544.0" stroke="#8e8e8e" stroke-width="2"/>
<line x1="590.0" y1="544.0" x2="608.0" y2="544.0" stroke="#ff0000" stroke-width="2"/>
<line x1="584.0" y1="550.0" x2="589.0" y2="550.0" stroke="#8e8e8e" stroke-width="2"/>
<line x1="590.0" y1="550.0" x2="607.0" y2="550.0" stroke="#ff0000" stroke-width="2"/>
<line x1="584.0" y1="556.0" x2="589.0" y2="556.0" stroke="#8e8e8e" stroke-width="2"/>
<line x1="590.0" y1="556.0" x2="605.0" y2="556.0" stroke="#ff0000" stroke-width="2"/>
<line x1="584.0" y1="562.0" x2="589.0" y2="562.0" stroke="#8e8e8e" stroke-width="2"/>
<line x1="590.0" y1="562.0" x2="600.0" y2="562.0" stroke="#ff0000" stroke-width="2"/>
<rect x="590.0" y="560.0" width="8.0" height="5.0" fill="#ff0000" stroke="none" stroke-width="1"/>
<line x1="650.0" y1="29.0" x2="650.0" y2="574.0" stroke="#fff" stroke-width="2"/>
<line x1="590.0" y1="574.0" x2="691.0" y2="574.0" stroke="#fff" stroke-width="2"/>
</g>
<text x="652.0" y="41.0" font-size="10.5" fill="#fff" textLength="14.5" lengthAdjust="spacingAndGlyphs" stroke="#fff" stroke-width="0.3">Inf.</text>
<text x="652.0" y="54.0" font-size="10.5" fill="#fff" textLength="30.0" lengthAdjust="spacingAndGlyphs" stroke="#fff" stroke-width="0.3">Temp.</text>
<line x1="669.5" y1="30.0" x2="669.5" y2="573.0" stroke="#9c9c9c" stroke-width="1" stroke-dasharray="3 3"/>
<line x1="671.3" y1="42.0" x2="671.3" y2="196.0" stroke="#ff0000" stroke-width="1.8"/>
<rect x="670.4" y="196.0" width="2.2" height="92.0" fill="none" stroke="#ff0000" stroke-width="1"/>
<rect x="665.4" y="288.0" width="5.2" height="65.4" fill="none" stroke="#3a96d2" stroke-width="1"/>
<rect x="670.4" y="353.4" width="4.2" height="50.6" fill="none" stroke="#ff0000" stroke-width="1"/>
<rect x="670.4" y="404.0" width="4.2" height="42.4" fill="none" stroke="#ff0000" stroke-width="1"/>
<rect x="668.5" y="446.4" width="2.0" height="35.2" fill="none" stroke="#3a96d2" stroke-width="1"/>
<rect x="670.4" y="481.6" width="13.2" height="30.8" fill="none" stroke="#ff0000" stroke-width="1"/>
<rect x="670.4" y="512.4" width="14.0" height="26.6" fill="none" stroke="#ff0000" stroke-width="1"/>
<rect x="670.4" y="539.0" width="6.2" height="25.0" fill="none" stroke="#ff0000" stroke-width="1"/>
<text x="672.0" y="125.8" font-size="10.5" fill="#ff0000" textLength="15.0" lengthAdjust="spacingAndGlyphs" stroke="#ff0000" stroke-width="0.3">0.7</text>
<text x="672.0" y="248.8" font-size="10.5" fill="#ff0000" textLength="15.0" lengthAdjust="spacingAndGlyphs" stroke="#ff0000" stroke-width="0.3">1.6</text>
<text x="672.0" y="386.3" font-size="10.5" fill="#ff0000" textLength="15.0" lengthAdjust="spacingAndGlyphs" stroke="#ff0000" stroke-width="0.3">3.0</text>
<text x="672.0" y="432.3" font-size="10.5" fill="#ff0000" textLength="15.0" lengthAdjust="spacingAndGlyphs" stroke="#ff0000" stroke-width="0.3">3.0</text>
<text x="672.0" y="503.3" font-size="10.5" fill="#ff0000" textLength="15.0" lengthAdjust="spacingAndGlyphs" stroke="#ff0000" stroke-width="0.3">8.7</text>
<text x="672.0" y="532.3" font-size="10.5" fill="#ff0000" textLength="15.0" lengthAdjust="spacingAndGlyphs" stroke="#ff0000" stroke-width="0.3">9.5</text>
<text x="672.0" y="557.3" font-size="10.5" fill="#ff0000" textLength="15.0" lengthAdjust="spacingAndGlyphs" stroke="#ff0000" stroke-width="0.3">4.1</text>
<text x="650.5" y="326.6" font-size="10.5" fill="#3a96d2" textLength="18.5" lengthAdjust="spacingAndGlyphs" stroke="#3a96d2" stroke-width="0.3">-2.6</text>
<text x="650.5" y="470.8" font-size="10.5" fill="#3a96d2" textLength="18.5" lengthAdjust="spacingAndGlyphs" stroke="#3a96d2" stroke-width="0.3">-1.2</text>
<clipPath id="ch"><rect x="691" y="29.5" width="478" height="409.5"/></clipPath>
<g clip-path="url(#ch)">
<circle cx="930.0" cy="234.5" r="24.0" fill="none" stroke="#666666" stroke-width="1" stroke-dasharray="4.5 3"/>
<circle cx="930.0" cy="234.5" r="48.0" fill="none" stroke="#666666" stroke-width="1" stroke-dasharray="4.5 3"/>
<circle cx="930.0" cy="234.5" r="72.0" fill="none" stroke="#666666" stroke-width="1" stroke-dasharray="4.5 3"/>
<circle cx="930.0" cy="234.5" r="96.0" fill="none" stroke="#666666" stroke-width="1" stroke-dasharray="4.5 3"/>
<circle cx="930.0" cy="234.5" r="120.0" fill="none" stroke="#666666" stroke-width="1" stroke-dasharray="4.5 3"/>
<circle cx="930.0" cy="234.5" r="144.0" fill="none" stroke="#666666" stroke-width="1" stroke-dasharray="4.5 3"/>
<circle cx="930.0" cy="234.5" r="168.0" fill="none" stroke="#666666" stroke-width="1" stroke-dasharray="4.5 3"/>
<circle cx="930.0" cy="234.5" r="192.0" fill="none" stroke="#666666" stroke-width="1" stroke-dasharray="4.5 3"/>
<circle cx="930.0" cy="234.5" r="216.0" fill="none" stroke="#666666" stroke-width="1" stroke-dasharray="4.5 3"/>
<circle cx="930.0" cy="234.5" r="240.0" fill="none" stroke="#666666" stroke-width="1" stroke-dasharray="4.5 3"/>
</g>
<line x1="930.0" y1="29.0" x2="930.0" y2="440.0" stroke="#fff" stroke-width="1.8"/>
<line x1="690.0" y1="234.5" x2="1170.0" y2="234.5" stroke="#fff" stroke-width="1.8"/>
<g clip-path="url(#ch)">
<text x="937.0" y="215.8" font-size="10.5" fill="#fff" textLength="11.5" lengthAdjust="spacingAndGlyphs" stroke="#fff" stroke-width="0.3">10</text>
<text x="937.0" y="263.8" font-size="10.5" fill="#fff" textLength="11.5" lengthAdjust="spacingAndGlyphs" stroke="#fff" stroke-width="0.3">10</text>
<text x="937.0" y="191.8" font-size="10.5" fill="#fff" textLength="11.5" lengthAdjust="spacingAndGlyphs" stroke="#fff" stroke-width="0.3">20</text>
<text x="937.0" y="287.8" font-size="10.5" fill="#fff" textLength="11.5" lengthAdjust="spacingAndGlyphs" stroke="#fff" stroke-width="0.3">20</text>
<text x="937.0" y="167.8" font-size="10.5" fill="#fff" textLength="11.5" lengthAdjust="spacingAndGlyphs" stroke="#fff" stroke-width="0.3">30</text>
<text x="937.0" y="311.8" font-size="10.5" fill="#fff" textLength="11.5" lengthAdjust="spacingAndGlyphs" stroke="#fff" stroke-width="0.3">30</text>
<text x="937.0" y="143.8" font-size="10.5" fill="#fff" textLength="11.5" lengthAdjust="spacingAndGlyphs" stroke="#fff" stroke-width="0.3">40</text>
<text x="937.0" y="335.8" font-size="10.5" fill="#fff" textLength="11.5" lengthAdjust="spacingAndGlyphs" stroke="#fff" stroke-width="0.3">40</text>
<text x="937.0" y="119.8" font-size="10.5" fill="#fff" textLength="11.5" lengthAdjust="spacingAndGlyphs" stroke="#fff" stroke-width="0.3">50</text>
<text x="937.0" y="359.8" font-size="10.5" fill="#fff" textLength="11.5" lengthAdjust="spacingAndGlyphs" stroke="#fff" stroke-width="0.3">50</text>
<text x="937.0" y="95.8" font-size="10.5" fill="#fff" textLength="11.5" lengthAdjust="spacingAndGlyphs" stroke="#fff" stroke-width="0.3">60</text>
<text x="937.0" y="383.8" font-size="10.5" fill="#fff" textLength="11.5" lengthAdjust="spacingAndGlyphs" stroke="#fff" stroke-width="0.3">60</text>
<text x="937.0" y="71.8" font-size="10.5" fill="#fff" textLength="11.5" lengthAdjust="spacingAndGlyphs" stroke="#fff" stroke-width="0.3">70</text>
<text x="937.0" y="407.8" font-size="10.5" fill="#fff" textLength="11.5" lengthAdjust="spacingAndGlyphs" stroke="#fff" stroke-width="0.3">70</text>
<text x="937.0" y="47.8" font-size="10.5" fill="#fff" textLength="11.5" lengthAdjust="spacingAndGlyphs" stroke="#fff" stroke-width="0.3">80</text>
<text x="937.0" y="431.8" font-size="10.5" fill="#fff" textLength="11.5" lengthAdjust="spacingAndGlyphs" stroke="#fff" stroke-width="0.3">80</text>
<text x="956.0" y="249.8" font-size="10.5" fill="#fff" text-anchor="middle" stroke="#fff" stroke-width="0.3">10</text>
<text x="908.0" y="249.8" font-size="10.5" fill="#fff" text-anchor="middle" stroke="#fff" stroke-width="0.3">10</text>
<text x="980.0" y="249.8" font-size="10.5" fill="#fff" text-anchor="middle" stroke="#fff" stroke-width="0.3">20</text>
<text x="884.0" y="249.8" font-size="10.5" fill="#fff" text-anchor="middle" stroke="#fff" stroke-width="0.3">20</text>
<text x="1004.0" y="249.8" font-size="10.5" fill="#fff" text-anchor="middle" stroke="#fff" stroke-width="0.3">30</text>
<text x="860.0" y="249.8" font-size="10.5" fill="#fff" text-anchor="middle" stroke="#fff" stroke-width="0.3">30</text>
<text x="1028.0" y="249.8" font-size="10.5" fill="#fff" text-anchor="middle" stroke="#fff" stroke-width="0.3">40</text>
<text x="836.0" y="249.8" font-size="10.5" fill="#fff" text-anchor="middle" stroke="#fff" stroke-width="0.3">40</text>
<text x="1052.0" y="249.8" font-size="10.5" fill="#fff" text-anchor="middle" stroke="#fff" stroke-width="0.3">50</text>
<text x="812.0" y="249.8" font-size="10.5" fill="#fff" text-anchor="middle" stroke="#fff" stroke-width="0.3">50</text>
<text x="1076.0" y="249.8" font-size="10.5" fill="#fff" text-anchor="middle" stroke="#fff" stroke-width="0.3">60</text>
<text x="788.0" y="249.8" font-size="10.5" fill="#fff" text-anchor="middle" stroke="#fff" stroke-width="0.3">60</text>
<text x="1100.0" y="249.8" font-size="10.5" fill="#fff" text-anchor="middle" stroke="#fff" stroke-width="0.3">70</text>
<text x="764.0" y="249.8" font-size="10.5" fill="#fff" text-anchor="middle" stroke="#fff" stroke-width="0.3">70</text>
<text x="1124.0" y="249.8" font-size="10.5" fill="#fff" text-anchor="middle" stroke="#fff" stroke-width="0.3">80</text>
<text x="740.0" y="249.8" font-size="10.5" fill="#fff" text-anchor="middle" stroke="#fff" stroke-width="0.3">80</text>
<text x="1148.0" y="249.8" font-size="10.5" fill="#fff" text-anchor="middle" stroke="#fff" stroke-width="0.3">90</text>
<text x="716.0" y="249.8" font-size="10.5" fill="#fff" text-anchor="middle" stroke="#fff" stroke-width="0.3">90</text>
<text x="1172.0" y="249.8" font-size="10.5" fill="#fff" text-anchor="middle" stroke="#fff" stroke-width="0.3">100</text>
<text x="692.0" y="249.8" font-size="10.5" fill="#fff" text-anchor="middle" stroke="#fff" stroke-width="0.3">100</text>
</g>
<line x1="690.0" y1="28.5" x2="690.0" y2="575.0" stroke="#fff" stroke-width="2"/>
<line x1="1170.4" y1="28.5" x2="1170.4" y2="575.0" stroke="#fff" stroke-width="2"/>
<line x1="689.0" y1="440.0" x2="1171.0" y2="440.0" stroke="#fff" stroke-width="2"/>
<line x1="689.0" y1="574.0" x2="1171.0" y2="574.0" stroke="#fff" stroke-width="2"/>
<g stroke-linejoin="round" stroke-linecap="round" fill="none">
<path d="M911.4,198.0 L897.4,158.0 L898.0,148.0 L901.6,137.0 L917.0,123.6 L942.4,108.4 L959.0,109.0 L964.0,110.0 L986.6,126.0 L988.0,138.0 L991.0,146.0 L991.6,155.0" fill="none" stroke="#ff0000" stroke-width="2.2"/>
<path d="M991.6,155.0 L985.0,149.4 L998.0,145.0 L1004.0,144.0 L1020.0,147.4 L1026.4,146.4" fill="none" stroke="#00ff00" stroke-width="2.2"/>
<path d="M1026.4,146.4 L1042.0,142.0 L1064.4,142.4 L1054.0,104.4 L1078.0,96.4" fill="none" stroke="#ffff00" stroke-width="2.2"/>
<path d="M1078.0,96.4 L1094.6,89.8 L1101.4,78.4 L1113.6,93.0" fill="none" stroke="#00ffff" stroke-width="2.2"/>
<path d="M911.4,198.0 L983.0,169.0 L985.0,149.4 L986.6,126.0" fill="none" stroke="#00dede" stroke-width="1.2"/>
<path d="M911.8,198.0 L898.6,148.0" fill="none" stroke="#ff00ff" stroke-width="1.2"/>
</g>
<text x="955.0" y="122.0" font-size="10.5" fill="#fff" textLength="49.5" lengthAdjust="spacingAndGlyphs" stroke="#fff" stroke-width="0.3">189/53 LM</text>
<text x="988.0" y="183.9" font-size="10.5" fill="#fff" textLength="49.4" lengthAdjust="spacingAndGlyphs" stroke="#fff" stroke-width="0.3">220/35 RM</text>
<text x="993.0" y="144.0" font-size="10.5" fill="#c98500" textLength="31.5" lengthAdjust="spacingAndGlyphs" stroke="#c98500" stroke-width="0.3">209/49</text>
<text x="1114.0" y="140.4" font-size="10.5" fill="#00a0e6" textLength="51.4" lengthAdjust="spacingAndGlyphs" stroke="#00a0e6" stroke-width="0.3">DN=240/86</text>
<text x="1034.0" y="240.1" font-size="10.5" fill="#00a0e6" textLength="49.5" lengthAdjust="spacingAndGlyphs" stroke="#00a0e6" stroke-width="0.3">UP=267/41</text>
<line x1="1030.0" y1="234.5" x2="1090.0" y2="234.5" stroke="#fff" stroke-width="1.8"/>
<circle cx="911.4" cy="198.0" r="4.6" fill="#d2d2d2" stroke="none" stroke-width="1"/>
<text x="911.4" y="200.9" font-size="7.4" fill="#000" text-anchor="middle" stroke="#000" stroke-width="0.3">0</text>
<circle cx="917.0" cy="123.6" r="4.6" fill="#d2d2d2" stroke="none" stroke-width="1"/>
<text x="917.0" y="126.5" font-size="7.4" fill="#000" text-anchor="middle" stroke="#000" stroke-width="0.3">1</text>
<circle cx="964.0" cy="110.0" r="4.6" fill="#d2d2d2" stroke="none" stroke-width="1"/>
<text x="964.0" y="112.9" font-size="7.4" fill="#000" text-anchor="middle" stroke="#000" stroke-width="0.3">2</text>
<circle cx="991.6" cy="155.0" r="4.6" fill="#d2d2d2" stroke="none" stroke-width="1"/>
<text x="991.6" y="157.9" font-size="7.4" fill="#000" text-anchor="middle" stroke="#000" stroke-width="0.3">3</text>
<circle cx="985.0" cy="149.4" r="4.6" fill="#d2d2d2" stroke="none" stroke-width="1"/>
<text x="985.0" y="152.3" font-size="7.4" fill="#000" text-anchor="middle" stroke="#000" stroke-width="0.3">4</text>
<circle cx="1004.0" cy="144.0" r="4.6" fill="#d2d2d2" stroke="none" stroke-width="1"/>
<text x="1004.0" y="146.9" font-size="7.4" fill="#000" text-anchor="middle" stroke="#000" stroke-width="0.3">5</text>
<circle cx="1026.4" cy="146.4" r="4.6" fill="#d2d2d2" stroke="none" stroke-width="1"/>
<text x="1026.4" y="149.3" font-size="7.4" fill="#000" text-anchor="middle" stroke="#000" stroke-width="0.3">6</text>
<circle cx="950.0" cy="107.6" r="5.2" fill="none" stroke="#d0d0d0" stroke-width="1.1"/>
<circle cx="983.4" cy="169.5" r="5.2" fill="none" stroke="#d0d0d0" stroke-width="1.1"/>
<rect x="982.6" y="133.6" width="8.8" height="8.8" fill="none" stroke="#d08a00" stroke-width="2"/>
<circle cx="1108.4" cy="129.2" r="2.8" fill="none" stroke="#00a0e6" stroke-width="1.2"/>
<circle cx="1028.0" cy="229.0" r="2.8" fill="none" stroke="#00a0e6" stroke-width="1.2"/>
<text x="705.4" y="415.8" font-size="12" fill="#00e5e5" textLength="105.1" lengthAdjust="spacingAndGlyphs" stroke="#00e5e5" stroke-width="0.45">Critical Angle = 83</text>
<line x1="810.0" y1="440.0" x2="810.0" y2="574.0" stroke="#fff" stroke-width="2"/>
<line x1="750.0" y1="441.0" x2="750.0" y2="573.0" stroke="#17529c" stroke-width="2"/>
<line x1="691.0" y1="507.0" x2="809.0" y2="507.0" stroke="#17529c" stroke-width="2"/>
<circle cx="750.5" cy="506.7" r="4.8" fill="none" stroke="#ff0000" stroke-width="1.0"/>
<circle cx="748.0" cy="506.2" r="4.8" fill="none" stroke="#ff0000" stroke-width="1.0"/>
<circle cx="745.0" cy="505.5" r="4.8" fill="none" stroke="#ff0000" stroke-width="1.0"/>
<circle cx="742.0" cy="504.5" r="4.8" fill="none" stroke="#ff0000" stroke-width="1.0"/>
<circle cx="739.0" cy="503.0" r="4.8" fill="none" stroke="#ff0000" stroke-width="1.0"/>
<circle cx="736.0" cy="501.2" r="4.8" fill="none" stroke="#ff0000" stroke-width="1.0"/>
<circle cx="733.0" cy="499.2" r="4.8" fill="none" stroke="#ff0000" stroke-width="1.0"/>
<circle cx="730.5" cy="497.2" r="4.8" fill="none" stroke="#ff0000" stroke-width="1.0"/>
<circle cx="728.0" cy="495.2" r="4.8" fill="none" stroke="#ff0000" stroke-width="1.0"/>
<circle cx="725.8" cy="493.0" r="4.8" fill="none" stroke="#ff0000" stroke-width="1.0"/>
<circle cx="723.8" cy="490.8" r="4.8" fill="none" stroke="#ff0000" stroke-width="1.0"/>
<circle cx="722.2" cy="488.5" r="4.8" fill="none" stroke="#ff0000" stroke-width="1.0"/>
<circle cx="720.8" cy="486.0" r="4.8" fill="none" stroke="#ff0000" stroke-width="1.0"/>
<circle cx="719.7" cy="483.5" r="4.8" fill="none" stroke="#ff0000" stroke-width="1.0"/>
<circle cx="718.8" cy="481.0" r="4.8" fill="none" stroke="#ff0000" stroke-width="1.0"/>
<circle cx="718.0" cy="478.5" r="4.8" fill="none" stroke="#ff0000" stroke-width="1.0"/>
<circle cx="717.8" cy="476.0" r="4.8" fill="none" stroke="#ff0000" stroke-width="1.0"/>
<circle cx="721.5" cy="466.8" r="4.8" fill="none" stroke="#00ff00" stroke-width="1.0"/>
<circle cx="721.2" cy="467.3" r="4.8" fill="none" stroke="#00ff00" stroke-width="1.0"/>
<circle cx="721.0" cy="467.8" r="4.8" fill="none" stroke="#00ff00" stroke-width="1.0"/>
<circle cx="720.7" cy="468.3" r="4.8" fill="none" stroke="#00ff00" stroke-width="1.0"/>
<circle cx="720.5" cy="468.9" r="4.8" fill="none" stroke="#00ff00" stroke-width="1.0"/>
<circle cx="720.2" cy="469.4" r="4.8" fill="none" stroke="#00ff00" stroke-width="1.0"/>
<circle cx="720.0" cy="469.9" r="4.8" fill="none" stroke="#00ff00" stroke-width="1.0"/>
<circle cx="719.7" cy="470.4" r="4.8" fill="none" stroke="#00ff00" stroke-width="1.0"/>
<circle cx="719.5" cy="470.9" r="4.8" fill="none" stroke="#00ff00" stroke-width="1.0"/>
<circle cx="719.2" cy="471.4" r="4.8" fill="none" stroke="#00ff00" stroke-width="1.0"/>
<circle cx="719.0" cy="471.9" r="4.8" fill="none" stroke="#00ff00" stroke-width="1.0"/>
<circle cx="718.7" cy="472.4" r="4.8" fill="none" stroke="#00ff00" stroke-width="1.0"/>
<circle cx="718.5" cy="473.0" r="4.8" fill="none" stroke="#00ff00" stroke-width="1.0"/>
<circle cx="718.2" cy="473.5" r="4.8" fill="none" stroke="#00ff00" stroke-width="1.0"/>
<circle cx="718.0" cy="474.0" r="4.8" fill="none" stroke="#00ff00" stroke-width="1.0"/>
<circle cx="717.7" cy="474.5" r="4.8" fill="none" stroke="#00ff00" stroke-width="1.0"/>
<circle cx="730.0" cy="462.5" r="4.8" fill="none" stroke="#ffff00" stroke-width="1.0"/>
<circle cx="726.5" cy="464.0" r="4.8" fill="none" stroke="#ffff00" stroke-width="1.0"/>
<circle cx="723.5" cy="465.5" r="4.8" fill="none" stroke="#ffff00" stroke-width="1.0"/>
<circle cx="741.5" cy="454.0" r="4.8" fill="none" stroke="#00e5e5" stroke-width="1.0"/>
<circle cx="737.2" cy="456.8" r="4.8" fill="none" stroke="#00e5e5" stroke-width="1.0"/>
<circle cx="733.2" cy="459.5" r="4.8" fill="none" stroke="#00e5e5" stroke-width="1.0"/>
<circle cx="747.5" cy="449.5" r="4.8" fill="none" stroke="#ff00ff" stroke-width="1.0"/>
<line x1="749.6" y1="507.2" x2="769.0" y2="482.8" stroke="#fff" stroke-width="1.7"/>
<text x="766.4" y="451.4" font-size="10" fill="#fff" textLength="38.1" lengthAdjust="spacingAndGlyphs" stroke="#fff" stroke-width="0.3">66.0 deg</text>
<text x="695.0" y="570.6" font-size="10" fill="#fff" textLength="56.0" lengthAdjust="spacingAndGlyphs" stroke="#fff" stroke-width="0.3">Storm Slinky</text>
<line x1="930.5" y1="440.0" x2="930.5" y2="574.0" stroke="#fff" stroke-width="2"/>
<line x1="811.0" y1="453.0" x2="816.0" y2="453.0" stroke="#fff" stroke-width="1.4"/>
<text x="820.0" y="456.6" font-size="10" fill="#fff" textLength="17.5" lengthAdjust="spacingAndGlyphs" stroke="#fff" stroke-width="0.3">600</text>
<line x1="811.0" y1="483.0" x2="816.0" y2="483.0" stroke="#fff" stroke-width="1.4"/>
<text x="820.0" y="486.6" font-size="10" fill="#fff" textLength="17.5" lengthAdjust="spacingAndGlyphs" stroke="#fff" stroke-width="0.3">700</text>
<line x1="811.0" y1="512.4" x2="816.0" y2="512.4" stroke="#fff" stroke-width="1.4"/>
<text x="820.0" y="516.0" font-size="10" fill="#fff" textLength="17.5" lengthAdjust="spacingAndGlyphs" stroke="#fff" stroke-width="0.3">800</text>
<line x1="811.0" y1="541.2" x2="816.0" y2="541.2" stroke="#fff" stroke-width="1.4"/>
<text x="820.0" y="544.8" font-size="10" fill="#fff" textLength="17.5" lengthAdjust="spacingAndGlyphs" stroke="#fff" stroke-width="0.3">900</text>
<clipPath id="ct"><rect x="811" y="441" width="118.5" height="132"/></clipPath><g clip-path="url(#ct)">
<line x1="842.0" y1="568.0" x2="842.0" y2="573.0" stroke="#fff" stroke-width="1.4"/>
<text x="842.0" y="566.9" font-size="10" fill="#fff" text-anchor="middle" textLength="17.5" lengthAdjust="spacingAndGlyphs" stroke="#fff" stroke-width="0.3">320</text>
<line x1="871.7" y1="568.0" x2="871.7" y2="573.0" stroke="#fff" stroke-width="1.4"/>
<text x="871.7" y="566.9" font-size="10" fill="#fff" text-anchor="middle" textLength="17.5" lengthAdjust="spacingAndGlyphs" stroke="#fff" stroke-width="0.3">330</text>
<line x1="902.6" y1="568.0" x2="902.6" y2="573.0" stroke="#fff" stroke-width="1.4"/>
<text x="902.6" y="566.9" font-size="10" fill="#fff" text-anchor="middle" textLength="17.5" lengthAdjust="spacingAndGlyphs" stroke="#fff" stroke-width="0.3">340</text>
<line x1="933.0" y1="568.0" x2="933.0" y2="573.0" stroke="#fff" stroke-width="1.4"/>
<text x="933.0" y="566.9" font-size="10" fill="#fff" text-anchor="middle" textLength="17.5" lengthAdjust="spacingAndGlyphs" stroke="#fff" stroke-width="0.3">350</text>
<path d="M840.9,453.1 L840.9,469.7 L848.6,483.5 L876.1,498.3 L876.6,513.3 L905.9,542.8 L908.1,553.4 L908.7,572.1 L913.6,573.7" fill="none" stroke="#ff0000" stroke-width="2" stroke-linejoin="round"/>
</g>
<line x1="1050.6" y1="440.0" x2="1050.6" y2="574.0" stroke="#fff" stroke-width="2"/>
<line x1="931.5" y1="554.6" x2="936.5" y2="554.6" stroke="#c8c8c8" stroke-width="1.4"/>
<line x1="1044.5" y1="554.6" x2="1049.6" y2="554.6" stroke="#c8c8c8" stroke-width="1.4"/>
<text x="942.0" y="557.4" font-size="7.6" fill="#fff" textLength="4.4" lengthAdjust="spacingAndGlyphs" stroke="#fff" stroke-width="0.25">2</text>
<line x1="931.5" y1="537.9" x2="936.5" y2="537.9" stroke="#c8c8c8" stroke-width="1.4"/>
<line x1="1044.5" y1="537.9" x2="1049.6" y2="537.9" stroke="#c8c8c8" stroke-width="1.4"/>
<text x="942.0" y="540.7" font-size="7.6" fill="#fff" textLength="4.4" lengthAdjust="spacingAndGlyphs" stroke="#fff" stroke-width="0.25">4</text>
<line x1="931.5" y1="521.1" x2="936.5" y2="521.1" stroke="#c8c8c8" stroke-width="1.4"/>
<line x1="1044.5" y1="521.1" x2="1049.6" y2="521.1" stroke="#c8c8c8" stroke-width="1.4"/>
<text x="942.0" y="523.9" font-size="7.6" fill="#fff" textLength="4.4" lengthAdjust="spacingAndGlyphs" stroke="#fff" stroke-width="0.25">6</text>
<line x1="931.5" y1="504.4" x2="936.5" y2="504.4" stroke="#c8c8c8" stroke-width="1.4"/>
<line x1="1044.5" y1="504.4" x2="1049.6" y2="504.4" stroke="#c8c8c8" stroke-width="1.4"/>
<text x="942.0" y="507.2" font-size="7.6" fill="#fff" textLength="4.4" lengthAdjust="spacingAndGlyphs" stroke="#fff" stroke-width="0.25">8</text>
<line x1="931.5" y1="487.6" x2="936.5" y2="487.6" stroke="#c8c8c8" stroke-width="1.4"/>
<line x1="1044.5" y1="487.6" x2="1049.6" y2="487.6" stroke="#c8c8c8" stroke-width="1.4"/>
<text x="942.0" y="490.4" font-size="7.6" fill="#fff" textLength="8.8" lengthAdjust="spacingAndGlyphs" stroke="#fff" stroke-width="0.25">10</text>
<line x1="931.5" y1="470.9" x2="936.5" y2="470.9" stroke="#c8c8c8" stroke-width="1.4"/>
<line x1="1044.5" y1="470.9" x2="1049.6" y2="470.9" stroke="#c8c8c8" stroke-width="1.4"/>
<text x="942.0" y="473.7" font-size="7.6" fill="#fff" textLength="8.8" lengthAdjust="spacingAndGlyphs" stroke="#fff" stroke-width="0.25">12</text>
<line x1="931.5" y1="454.1" x2="936.5" y2="454.1" stroke="#c8c8c8" stroke-width="1.4"/>
<line x1="1044.5" y1="454.1" x2="1049.6" y2="454.1" stroke="#c8c8c8" stroke-width="1.4"/>
<text x="942.0" y="456.9" font-size="7.6" fill="#fff" textLength="8.8" lengthAdjust="spacingAndGlyphs" stroke="#fff" stroke-width="0.25">14</text>
<line x1="946.9" y1="441.0" x2="946.9" y2="445.0" stroke="#c8c8c8" stroke-width="1.2"/>
<line x1="946.9" y1="569.5" x2="946.9" y2="573.0" stroke="#c8c8c8" stroke-width="1.2"/>
<line x1="963.7" y1="441.0" x2="963.7" y2="445.0" stroke="#c8c8c8" stroke-width="1.2"/>
<line x1="963.7" y1="569.5" x2="963.7" y2="573.0" stroke="#c8c8c8" stroke-width="1.2"/>
<line x1="980.5" y1="441.0" x2="980.5" y2="445.0" stroke="#c8c8c8" stroke-width="1.2"/>
<line x1="980.5" y1="569.5" x2="980.5" y2="573.0" stroke="#c8c8c8" stroke-width="1.2"/>
<line x1="997.3" y1="441.0" x2="997.3" y2="445.0" stroke="#c8c8c8" stroke-width="1.2"/>
<line x1="997.3" y1="569.5" x2="997.3" y2="573.0" stroke="#c8c8c8" stroke-width="1.2"/>
<line x1="1014.1" y1="441.0" x2="1014.1" y2="445.0" stroke="#c8c8c8" stroke-width="1.2"/>
<line x1="1014.1" y1="569.5" x2="1014.1" y2="573.0" stroke="#c8c8c8" stroke-width="1.2"/>
<line x1="1030.9" y1="441.0" x2="1030.9" y2="445.0" stroke="#c8c8c8" stroke-width="1.2"/>
<line x1="1030.9" y1="569.5" x2="1030.9" y2="573.0" stroke="#c8c8c8" stroke-width="1.2"/>
<line x1="1047.7" y1="441.0" x2="1047.7" y2="445.0" stroke="#c8c8c8" stroke-width="1.2"/>
<line x1="1047.7" y1="569.5" x2="1047.7" y2="573.0" stroke="#c8c8c8" stroke-width="1.2"/>
<line x1="956.0" y1="441.0" x2="956.0" y2="573.0" stroke="#c0c0c0" stroke-width="1.6" stroke-dasharray="3 2.2"/>
<line x1="997.8" y1="441.0" x2="997.8" y2="505.0" stroke="#a020a0" stroke-width="1.6" stroke-dasharray="3 2.2"/>
<line x1="1047.8" y1="441.0" x2="1047.8" y2="505.0" stroke="#a020a0" stroke-width="1.6" stroke-dasharray="3 2.2"/>
<text x="968.5" y="456.2" font-size="7.6" fill="#e8e8e8" text-anchor="middle" stroke="#e8e8e8" stroke-width="0.25">SR Wind</text>
<text x="968.5" y="465.4" font-size="7.6" fill="#e8e8e8" text-anchor="middle" stroke="#e8e8e8" stroke-width="0.25">v.</text>
<text x="968.5" y="474.2" font-size="7.6" fill="#e8e8e8" text-anchor="middle" stroke="#e8e8e8" stroke-width="0.25">Height</text>
<text x="1018.0" y="465.4" font-size="7.6" fill="#b020b0" text-anchor="middle" stroke="#b020b0" stroke-width="0.25">Classic</text>
<text x="1018.0" y="474.2" font-size="7.6" fill="#b020b0" text-anchor="middle" stroke="#b020b0" stroke-width="0.25">Supercell</text>
<clipPath id="cw"><rect x="931.5" y="441" width="118" height="132"/></clipPath><g clip-path="url(#cw)">
<path d="M990.5,440.4 L1021.4,453.8 L1036.4,469.7 L1034.1,481.8 L1028.0,491.7 L997.1,500.1 L990.1,508.2 L959.7,523.0 L945.3,534.0 L939.4,545.7 L975.1,554.5 L991.0,564.4 L990.1,568.4 L983.5,572.8" fill="none" stroke="#ff0000" stroke-width="2" stroke-linejoin="round"/>
</g>
<line x1="1028.0" y1="478.0" x2="1028.0" y2="496.5" stroke="#a020f0" stroke-width="2"/>
<line x1="950.8" y1="520.0" x2="950.8" y2="538.4" stroke="#5a96e8" stroke-width="2"/>
<line x1="981.0" y1="554.0" x2="981.0" y2="573.0" stroke="#b00000" stroke-width="1.6"/>
<line x1="1051.0" y1="464.6" x2="1170.0" y2="464.6" stroke="#fff" stroke-width="1.6"/>
<text x="1064.3" y="458.1" font-size="14.5" fill="#fff" textLength="93.7" lengthAdjust="spacingAndGlyphs" stroke="#fff" stroke-width="0.3">Psbl Haz. Type</text>
<text x="1098.0" y="520.1" font-size="14.5" fill="#ff0000" textLength="26.5" lengthAdjust="spacingAndGlyphs" stroke="#ff0000" stroke-width="0.3">TOR</text>
<rect x="10.5" y="597.5" width="1159.0" height="192.0" fill="none" stroke="#38a0dc" stroke-width="3"/>
<line x1="301.0" y1="598.0" x2="301.0" y2="789.0" stroke="#38a0dc" stroke-width="2"/>
<line x1="590.0" y1="598.0" x2="590.0" y2="789.0" stroke="#38a0dc" stroke-width="2"/>
<line x1="880.0" y1="598.0" x2="880.0" y2="789.0" stroke="#38a0dc" stroke-width="2"/>
<text x="38.4" y="609.0" font-size="11" fill="#fff" textLength="19.3" lengthAdjust="spacingAndGlyphs" stroke="#fff" stroke-width="0.3">PCL</text>
<text x="70.2" y="609.0" font-size="11" fill="#fff" textLength="27.6" lengthAdjust="spacingAndGlyphs" stroke="#fff" stroke-width="0.3">CAPE</text>
<text x="107.4" y="609.0" font-size="11" fill="#fff" textLength="25.2" lengthAdjust="spacingAndGlyphs" stroke="#fff" stroke-width="0.3">CINH</text>
<text x="146.5" y="609.0" font-size="11" fill="#fff" textLength="19.0" lengthAdjust="spacingAndGlyphs" stroke="#fff" stroke-width="0.3">LCL</text>
<text x="188.0" y="609.0" font-size="11" fill="#fff" textLength="8.0" lengthAdjust="spacingAndGlyphs" stroke="#fff" stroke-width="0.3">LI</text>
<text x="218.6" y="609.0" font-size="11" fill="#fff" textLength="18.8" lengthAdjust="spacingAndGlyphs" stroke="#fff" stroke-width="0.3">LFC</text>
<text x="258.3" y="609.0" font-size="11" fill="#fff" textLength="11.4" lengthAdjust="spacingAndGlyphs" stroke="#fff" stroke-width="0.3">EL</text>
<line x1="12.0" y1="610.5" x2="299.6" y2="610.5" stroke="#fff" stroke-width="1.2"/>
<text x="38.0" y="624.2" font-size="11" fill="#fff" textLength="20.0" lengthAdjust="spacingAndGlyphs" stroke="#fff" stroke-width="0.3">SFC</text>
<text x="72.0" y="624.2" font-size="11" fill="#fff" textLength="24.0" lengthAdjust="spacingAndGlyphs" stroke="#fff" stroke-width="0.3">1773</text>
<text x="117.0" y="624.2" font-size="11" fill="#00ff00" textLength="6.0" lengthAdjust="spacingAndGlyphs" stroke="#00ff00" stroke-width="0.3">0</text>
<text x="147.0" y="624.2" font-size="11" fill="#fff" textLength="18.0" lengthAdjust="spacingAndGlyphs" stroke="#fff" stroke-width="0.3">446</text>
<text x="187.3" y="624.2" font-size="11" fill="#fff" textLength="9.4" lengthAdjust="spacingAndGlyphs" stroke="#fff" stroke-width="0.3">-6</text>
<text x="219.0" y="624.2" font-size="11" fill="#fff" textLength="18.0" lengthAdjust="spacingAndGlyphs" stroke="#fff" stroke-width="0.3">446</text>
<text x="249.0" y="624.2" font-size="11" fill="#fff" textLength="30.0" lengthAdjust="spacingAndGlyphs" stroke="#fff" stroke-width="0.3">12282</text>
<text x="40.5" y="635.2" font-size="11" fill="#fff" textLength="15.0" lengthAdjust="spacingAndGlyphs" stroke="#fff" stroke-width="0.3">ML</text>
<text x="72.0" y="635.2" font-size="11" fill="#fff" textLength="24.0" lengthAdjust="spacingAndGlyphs" stroke="#fff" stroke-width="0.3">1492</text>
<text x="115.3" y="635.2" font-size="11" fill="#fff" textLength="9.4" lengthAdjust="spacingAndGlyphs" stroke="#fff" stroke-width="0.3">-3</text>
<text x="147.0" y="635.2" font-size="11" fill="#fff" textLength="18.0" lengthAdjust="spacingAndGlyphs" stroke="#fff" stroke-width="0.3">546</text>
<text x="187.3" y="635.2" font-size="11" fill="#fff" textLength="9.4" lengthAdjust="spacingAndGlyphs" stroke="#fff" stroke-width="0.3">-6</text>
<text x="216.0" y="635.2" font-size="11" fill="#fff" textLength="24.0" lengthAdjust="spacingAndGlyphs" stroke="#fff" stroke-width="0.3">2499</text>
<text x="249.0" y="635.2" font-size="11" fill="#fff" textLength="30.0" lengthAdjust="spacingAndGlyphs" stroke="#fff" stroke-width="0.3">12123</text>
<text x="35.5" y="646.2" font-size="11" fill="#fff" textLength="25.0" lengthAdjust="spacingAndGlyphs" stroke="#fff" stroke-width="0.3">FCST</text>
<text x="72.0" y="646.2" font-size="11" fill="#fff" textLength="24.0" lengthAdjust="spacingAndGlyphs" stroke="#fff" stroke-width="0.3">2422</text>
<text x="117.0" y="646.2" font-size="11" fill="#fff" textLength="6.0" lengthAdjust="spacingAndGlyphs" stroke="#fff" stroke-width="0.3">0</text>
<text x="144.0" y="646.2" font-size="11" fill="#fff" textLength="24.0" lengthAdjust="spacingAndGlyphs" stroke="#fff" stroke-width="0.3">1010</text>
<text x="187.3" y="646.2" font-size="11" fill="#fff" textLength="9.4" lengthAdjust="spacingAndGlyphs" stroke="#fff" stroke-width="0.3">-8</text>
<text x="216.0" y="646.2" font-size="11" fill="#fff" textLength="24.0" lengthAdjust="spacingAndGlyphs" stroke="#fff" stroke-width="0.3">1010</text>
<text x="249.0" y="646.2" font-size="11" fill="#fff" textLength="30.0" lengthAdjust="spacingAndGlyphs" stroke="#fff" stroke-width="0.3">12611</text>
<text x="39.8" y="657.2" font-size="11" fill="#fff" textLength="16.4" lengthAdjust="spacingAndGlyphs" stroke="#fff" stroke-width="0.3">MU</text>
<text x="72.0" y="657.2" font-size="11" fill="#fff" textLength="24.0" lengthAdjust="spacingAndGlyphs" stroke="#fff" stroke-width="0.3">1773</text>
<text x="117.0" y="657.2" font-size="11" fill="#fff" textLength="6.0" lengthAdjust="spacingAndGlyphs" stroke="#fff" stroke-width="0.3">0</text>
<text x="147.0" y="657.2" font-size="11" fill="#fff" textLength="18.0" lengthAdjust="spacingAndGlyphs" stroke="#fff" stroke-width="0.3">446</text>
<text x="187.3" y="657.2" font-size="11" fill="#fff" textLength="9.4" lengthAdjust="spacingAndGlyphs" stroke="#fff" stroke-width="0.3">-6</text>
<text x="219.0" y="657.2" font-size="11" fill="#fff" textLength="18.0" lengthAdjust="spacingAndGlyphs" stroke="#fff" stroke-width="0.3">446</text>
<text x="249.0" y="657.2" font-size="11" fill="#fff" textLength="30.0" lengthAdjust="spacingAndGlyphs" stroke="#fff" stroke-width="0.3">12282</text>
<rect x="14.4" y="647.6" width="284.6" height="12.0" fill="none" stroke="#6b4423" stroke-width="1"/>
<line x1="12.0" y1="661.2" x2="299.6" y2="661.2" stroke="#fff" stroke-width="1.6"/>
<text x="17.4" y="674.2" font-size="10.5" fill="#fff" textLength="58.2" lengthAdjust="spacingAndGlyphs" stroke="#fff" stroke-width="0.3">PW = 1.38in</text>
<text x="113.4" y="674.2" font-size="10.5" fill="#fff" textLength="30.0" lengthAdjust="spacingAndGlyphs" stroke="#fff" stroke-width="0.3">K = 23</text>
<text x="186.6" y="674.2" font-size="10.5" fill="#fff" textLength="58.4" lengthAdjust="spacingAndGlyphs" stroke="#fff" stroke-width="0.3">WNDG = 0.0</text>
<text x="17.4" y="685.2" font-size="10.5" fill="#fff" textLength="92.2" lengthAdjust="spacingAndGlyphs" stroke="#fff" stroke-width="0.3">MeanW = 14.6g/kg</text>
<text x="113.4" y="685.2" font-size="10.5" fill="#fff" textLength="35.6" lengthAdjust="spacingAndGlyphs" stroke="#fff" stroke-width="0.3">TT = 51</text>
<text x="186.6" y="685.2" font-size="10.5" fill="#fff" textLength="39.0" lengthAdjust="spacingAndGlyphs" stroke="#fff" stroke-width="0.3">TEI = 23</text>
<text x="17.4" y="696.2" font-size="10.5" fill="#fff" textLength="66.6" lengthAdjust="spacingAndGlyphs" stroke="#fff" stroke-width="0.3">LowRH = 94%</text>
<text x="113.4" y="696.2" font-size="10.5" fill="#fff" textLength="61.2" lengthAdjust="spacingAndGlyphs" stroke="#fff" stroke-width="0.3">ConvT = 77F</text>
<text x="186.6" y="696.2" font-size="10.5" fill="#fff" textLength="50.8" lengthAdjust="spacingAndGlyphs" stroke="#fff" stroke-width="0.3">3CAPE = 5</text>
<text x="17.4" y="707.0" font-size="10.5" fill="#fff" textLength="64.6" lengthAdjust="spacingAndGlyphs" stroke="#fff" stroke-width="0.3">MidRH = 54%</text>
<text x="113.4" y="707.0" font-size="10.5" fill="#fff" textLength="57.6" lengthAdjust="spacingAndGlyphs" stroke="#fff" stroke-width="0.3">maxT = 82F</text>
<text x="17.4" y="718.0" font-size="10.5" fill="#fff" textLength="70.6" lengthAdjust="spacingAndGlyphs" stroke="#fff" stroke-width="0.3">DCAPE = 1143</text>
<text x="113.4" y="718.0" font-size="10.5" fill="#fff" textLength="46.6" lengthAdjust="spacingAndGlyphs" stroke="#fff" stroke-width="0.3">ESP = 0.0</text>
<text x="17.4" y="729.0" font-size="10.5" fill="#fff" textLength="64.0" lengthAdjust="spacingAndGlyphs" stroke="#fff" stroke-width="0.3">DownT = 59F</text>
<text x="113.4" y="729.0" font-size="10.5" fill="#fff" textLength="58.6" lengthAdjust="spacingAndGlyphs" stroke="#fff" stroke-width="0.3">MMP = 0.98</text>
<text x="186.6" y="729.0" font-size="10.5" fill="#fff" textLength="108.0" lengthAdjust="spacingAndGlyphs" stroke="#fff" stroke-width="0.3">SigSvr = 40327 m3/s3</text>
<line x1="12.0" y1="732.6" x2="299.6" y2="732.6" stroke="#fff" stroke-width="1.4"/>
<line x1="210.4" y1="732.6" x2="210.4" y2="787.6" stroke="#fff" stroke-width="1.4"/>
<text x="17.4" y="745.0" font-size="10.5" fill="#fff" textLength="136.6" lengthAdjust="spacingAndGlyphs" stroke="#fff" stroke-width="0.3">Sfc-3km AGL LR = 5.9 C/km</text>
<text x="215.6" y="745.0" font-size="10.5" fill="#ff0000" textLength="78.4" lengthAdjust="spacingAndGlyphs" stroke="#ff0000" stroke-width="0.3">Supercell = 18.3</text>
<text x="17.4" y="756.2" font-size="10.5" fill="#fff" textLength="126.6" lengthAdjust="spacingAndGlyphs" stroke="#fff" stroke-width="0.3">3-6km AGL LR = 7.6 C/km</text>
<text x="215.6" y="756.2" font-size="10.5" fill="#ff0000" textLength="71.4" lengthAdjust="spacingAndGlyphs" stroke="#ff0000" stroke-width="0.3">STP (cin) = 4.8</text>
<text x="17.4" y="767.2" font-size="10.5" fill="#fff" textLength="128.6" lengthAdjust="spacingAndGlyphs" stroke="#fff" stroke-width="0.3">850-500mb LR = 6.8 C/km</text>
<text x="215.6" y="767.2" font-size="10.5" fill="#ffff00" textLength="68.7" lengthAdjust="spacingAndGlyphs" stroke="#ffff00" stroke-width="0.3">STP (fix) = 3.3</text>
<text x="17.4" y="778.2" font-size="10.5" fill="#fff" textLength="128.6" lengthAdjust="spacingAndGlyphs" stroke="#fff" stroke-width="0.3">700-500mb LR = 7.6 C/km</text>
<text x="215.6" y="778.2" font-size="10.5" fill="#ffff00" textLength="50.4" lengthAdjust="spacingAndGlyphs" stroke="#ffff00" stroke-width="0.3">SHIP = 1.4</text>
<text x="369.2" y="612.0" font-size="10.5" fill="#fff" textLength="16.5" lengthAdjust="spacingAndGlyphs" stroke="#fff" stroke-width="0.3">EHI</text>
<text x="407.1" y="612.0" font-size="10.5" fill="#fff" textLength="20.5" lengthAdjust="spacingAndGlyphs" stroke="#fff" stroke-width="0.3">SRH</text>
<text x="441.6" y="611.8" font-size="10.5" fill="#fff" textLength="28.4" lengthAdjust="spacingAndGlyphs" stroke="#fff" stroke-width="0.3">Shear</text>
<text x="492.0" y="611.8" font-size="10.5" fill="#fff" textLength="40.0" lengthAdjust="spacingAndGlyphs" stroke="#fff" stroke-width="0.3">MnWind</text>
<text x="551.6" y="611.8" font-size="10.5" fill="#fff" textLength="23.4" lengthAdjust="spacingAndGlyphs" stroke="#fff" stroke-width="0.3">SRW</text>
<line x1="302.4" y1="613.6" x2="588.6" y2="613.6" stroke="#fff" stroke-width="1.2"/>
<text x="307.4" y="625.2" font-size="10.5" fill="#fff" textLength="44.0" lengthAdjust="spacingAndGlyphs" stroke="#fff" stroke-width="0.3">SFC-1km</text>
<text x="370.8" y="625.2" font-size="10.5" fill="#fff" textLength="15.0" lengthAdjust="spacingAndGlyphs" stroke="#fff" stroke-width="0.3">3.5</text>
<text x="409.6" y="625.2" font-size="10.5" fill="#fff" textLength="16.9" lengthAdjust="spacingAndGlyphs" stroke="#fff" stroke-width="0.3">311</text>
<text x="458.4" y="625.2" font-size="10.5" fill="#fff" textLength="11.6" lengthAdjust="spacingAndGlyphs" stroke="#fff" stroke-width="0.3">31</text>
<text x="491.0" y="625.2" font-size="10.5" fill="#fff" textLength="35.0" lengthAdjust="spacingAndGlyphs" stroke="#fff" stroke-width="0.3">162/36</text>
<text x="547.0" y="625.2" font-size="10.5" fill="#fff" textLength="34.6" lengthAdjust="spacingAndGlyphs" stroke="#fff" stroke-width="0.3">103/34</text>
<text x="307.4" y="636.2" font-size="10.5" fill="#fff" textLength="44.0" lengthAdjust="spacingAndGlyphs" stroke="#fff" stroke-width="0.3">SFC-3km</text>
<text x="370.8" y="636.2" font-size="10.5" fill="#fff" textLength="15.0" lengthAdjust="spacingAndGlyphs" stroke="#fff" stroke-width="0.3">5.9</text>
<text x="409.6" y="636.2" font-size="10.5" fill="#fff" textLength="16.9" lengthAdjust="spacingAndGlyphs" stroke="#fff" stroke-width="0.3">530</text>
<text x="458.4" y="636.2" font-size="10.5" fill="#fff" textLength="11.6" lengthAdjust="spacingAndGlyphs" stroke="#fff" stroke-width="0.3">38</text>
<text x="491.0" y="636.2" font-size="10.5" fill="#fff" textLength="35.0" lengthAdjust="spacingAndGlyphs" stroke="#fff" stroke-width="0.3">184/42</text>
<text x="547.0" y="636.2" font-size="10.5" fill="#fff" textLength="34.6" lengthAdjust="spacingAndGlyphs" stroke="#fff" stroke-width="0.3">128/25</text>
<text x="307.4" y="647.2" font-size="10.5" fill="#fff" textLength="46.0" lengthAdjust="spacingAndGlyphs" stroke="#fff" stroke-width="0.3">Eff Inflow</text>
<text x="370.8" y="647.2" font-size="10.5" fill="#fff" textLength="15.0" lengthAdjust="spacingAndGlyphs" stroke="#fff" stroke-width="0.3">5.7</text>
<text x="409.6" y="647.2" font-size="10.5" fill="#fff" textLength="16.9" lengthAdjust="spacingAndGlyphs" stroke="#fff" stroke-width="0.3">516</text>
<text x="458.4" y="647.2" font-size="10.5" fill="#fff" textLength="11.6" lengthAdjust="spacingAndGlyphs" stroke="#fff" stroke-width="0.3">43</text>
<text x="491.0" y="647.2" font-size="10.5" fill="#fff" textLength="35.0" lengthAdjust="spacingAndGlyphs" stroke="#fff" stroke-width="0.3">179/43</text>
<text x="547.0" y="647.2" font-size="10.5" fill="#fff" textLength="34.6" lengthAdjust="spacingAndGlyphs" stroke="#fff" stroke-width="0.3">125/28</text>
<text x="307.4" y="663.2" font-size="10.5" fill="#fff" textLength="44.0" lengthAdjust="spacingAndGlyphs" stroke="#fff" stroke-width="0.3">SFC-6km</text>
<text x="458.4" y="663.2" font-size="10.5" fill="#fff" textLength="11.6" lengthAdjust="spacingAndGlyphs" stroke="#fff" stroke-width="0.3">53</text>
<text x="491.0" y="663.2" font-size="10.5" fill="#fff" textLength="35.0" lengthAdjust="spacingAndGlyphs" stroke="#fff" stroke-width="0.3">196/41</text>
<text x="547.0" y="663.2" font-size="10.5" fill="#fff" textLength="34.6" lengthAdjust="spacingAndGlyphs" stroke="#fff" stroke-width="0.3">140/17</text>
<text x="307.4" y="674.2" font-size="10.5" fill="#fff" textLength="44.0" lengthAdjust="spacingAndGlyphs" stroke="#fff" stroke-width="0.3">SFC-8km</text>
<text x="458.4" y="674.2" font-size="10.5" fill="#fff" textLength="11.6" lengthAdjust="spacingAndGlyphs" stroke="#fff" stroke-width="0.3">69</text>
<text x="491.0" y="674.2" font-size="10.5" fill="#fff" textLength="35.0" lengthAdjust="spacingAndGlyphs" stroke="#fff" stroke-width="0.3">201/43</text>
<text x="547.0" y="674.2" font-size="10.5" fill="#fff" textLength="34.6" lengthAdjust="spacingAndGlyphs" stroke="#fff" stroke-width="0.3">152/15</text>
<text x="307.4" y="685.2" font-size="10.5" fill="#fff" textLength="102.6" lengthAdjust="spacingAndGlyphs" stroke="#fff" stroke-width="0.3">LCL-EL (Cloud Layer)</text>
<text x="458.4" y="685.2" font-size="10.5" fill="#fff" textLength="11.6" lengthAdjust="spacingAndGlyphs" stroke="#fff" stroke-width="0.3">92</text>
<text x="491.0" y="685.2" font-size="10.5" fill="#fff" textLength="35.0" lengthAdjust="spacingAndGlyphs" stroke="#fff" stroke-width="0.3">209/49</text>
<text x="547.0" y="685.2" font-size="10.5" fill="#fff" textLength="34.6" lengthAdjust="spacingAndGlyphs" stroke="#fff" stroke-width="0.3">187/16</text>
<text x="307.4" y="696.2" font-size="10.5" fill="#fff" textLength="84.6" lengthAdjust="spacingAndGlyphs" stroke="#fff" stroke-width="0.3">Eff Shear (EBWD)</text>
<text x="458.4" y="696.2" font-size="10.5" fill="#fff" textLength="11.6" lengthAdjust="spacingAndGlyphs" stroke="#fff" stroke-width="0.3">54</text>
<text x="491.0" y="696.2" font-size="10.5" fill="#fff" textLength="35.0" lengthAdjust="spacingAndGlyphs" stroke="#fff" stroke-width="0.3">196/41</text>
<text x="547.0" y="696.2" font-size="10.5" fill="#fff" textLength="34.6" lengthAdjust="spacingAndGlyphs" stroke="#fff" stroke-width="0.3">140/17</text>
<text x="307.4" y="712.2" font-size="10.5" fill="#fff" textLength="60.6" lengthAdjust="spacingAndGlyphs" stroke="#fff" stroke-width="0.3">BRN Shear =</text>
<text x="422.6" y="712.2" font-size="10.5" fill="#fff" textLength="47.4" lengthAdjust="spacingAndGlyphs" stroke="#fff" stroke-width="0.3">88 m2/s2</text>
<text x="307.4" y="723.2" font-size="10.5" fill="#fff" textLength="82.6" lengthAdjust="spacingAndGlyphs" stroke="#fff" stroke-width="0.3">4-6km SR Wind =</text>
<text x="423.0" y="723.2" font-size="10.5" fill="#fff" textLength="47.0" lengthAdjust="spacingAndGlyphs" stroke="#fff" stroke-width="0.3">199/10 kt</text>
<text x="307.4" y="739.2" font-size="10.5" fill="#fff" textLength="125.6" lengthAdjust="spacingAndGlyphs" stroke="#fff" stroke-width="0.3">...Storm Motion Vectors...</text>
<text x="307.4" y="750.2" font-size="10.5" fill="#fff" textLength="76.6" lengthAdjust="spacingAndGlyphs" stroke="#fff" stroke-width="0.3">Bunkers Right =</text>
<text x="423.0" y="750.2" font-size="10.5" fill="#1e96dc" textLength="47.0" lengthAdjust="spacingAndGlyphs" stroke="#1e96dc" stroke-width="0.3">220/35 kt</text>
<text x="307.4" y="761.2" font-size="10.5" fill="#fff" textLength="70.6" lengthAdjust="spacingAndGlyphs" stroke="#fff" stroke-width="0.3">Bunkers Left =</text>
<text x="423.0" y="761.2" font-size="10.5" fill="#f05050" textLength="47.0" lengthAdjust="spacingAndGlyphs" stroke="#f05050" stroke-width="0.3">189/53 kt</text>
<text x="307.4" y="772.2" font-size="10.5" fill="#fff" textLength="98.6" lengthAdjust="spacingAndGlyphs" stroke="#fff" stroke-width="0.3">Corfidi Downshear =</text>
<text x="423.0" y="772.2" font-size="10.5" fill="#fff" textLength="47.0" lengthAdjust="spacingAndGlyphs" stroke="#fff" stroke-width="0.3">240/86 kt</text>
<text x="307.4" y="783.2" font-size="10.5" fill="#fff" textLength="83.6" lengthAdjust="spacingAndGlyphs" stroke="#fff" stroke-width="0.3">Corfidi Upshear =</text>
<text x="423.0" y="783.2" font-size="10.5" fill="#fff" textLength="47.0" lengthAdjust="spacingAndGlyphs" stroke="#fff" stroke-width="0.3">267/41 kt</text>
<text x="487.0" y="769.4" font-size="10.4" fill="#1e6fc8" textLength="78.0" lengthAdjust="spacingAndGlyphs" stroke="#1e6fc8" stroke-width="0.5">1km &amp; 6km AGL</text>
<text x="498.6" y="781.8" font-size="10.4" fill="#1e6fc8" textLength="55.2" lengthAdjust="spacingAndGlyphs" stroke="#1e6fc8" stroke-width="0.5">Wind Barbs</text>
<path transform="translate(526.3,733.4) rotate(137.0)" d="M0,0 L25.0,0 M25.0,0 L25.0,10.5 L21.0,0 M19.0,0 L19.0,5.5" fill="none" stroke="#1a7ac8" stroke-width="1.1"/>
<path transform="translate(526.3,733.4) rotate(85.0)" d="M0,0 L25.0,0 M25.0,0 L25.0,10.5 M20.8,0 L20.8,10.5 M16.6,0 L16.6,10.5 M12.4,0 L12.4,10.5 M8.2,0 L8.2,5.5" fill="none" stroke="#d00000" stroke-width="1.1"/>
<text x="614.0" y="618.7" font-size="19.6" fill="#fff" textLength="244.0" lengthAdjust="spacingAndGlyphs" stroke="#fff" stroke-width="0.6">SARS - Sounding Analogs</text>
<line x1="591.4" y1="625.6" x2="879.0" y2="625.6" stroke="#fff" stroke-width="1.4"/>
<line x1="736.4" y1="625.6" x2="736.4" y2="787.6" stroke="#fff" stroke-width="1.4"/>
<text x="628.4" y="640.0" font-size="12" fill="#fff" textLength="69.6" lengthAdjust="spacingAndGlyphs" stroke="#fff" stroke-width="0.3">SUPERCELL</text>
<text x="770.4" y="640.0" font-size="12" fill="#fff" textLength="73.4" lengthAdjust="spacingAndGlyphs" stroke="#fff" stroke-width="0.3">SGFNT HAIL</text>
<text x="596.4" y="654.6" font-size="10" fill="#ff0000" textLength="68.0" lengthAdjust="spacingAndGlyphs" stroke="#ff0000" stroke-width="0.3">87111600.GGG</text>
<text x="700.0" y="654.6" font-size="10" fill="#ff0000" textLength="15.6" lengthAdjust="spacingAndGlyphs" stroke="#ff0000" stroke-width="0.3">SIG</text>
<text x="763.6" y="683.0" font-size="10" fill="#fff" textLength="86.8" lengthAdjust="spacingAndGlyphs" stroke="#fff" stroke-width="0.3">No Quality Matches</text>
<text x="620.0" y="767.8" font-size="10" fill="#ff00ff" textLength="85.9" lengthAdjust="spacingAndGlyphs" stroke="#ff00ff" stroke-width="0.3">(10 loose matches)</text>
<text x="627.8" y="782.8" font-size="10" fill="#ff00ff" textLength="70.2" lengthAdjust="spacingAndGlyphs" stroke="#ff00ff" stroke-width="0.3">SARS: 50% TOR</text>
<text x="763.7" y="767.8" font-size="10" fill="#fff" textLength="86.1" lengthAdjust="spacingAndGlyphs" stroke="#fff" stroke-width="0.3">(20 loose matches)</text>
<text x="773.6" y="782.8" font-size="10" fill="#fff" textLength="66.3" lengthAdjust="spacingAndGlyphs" stroke="#fff" stroke-width="0.3">SARS: 30% SIG</text>
<text x="910.0" y="612.5" font-size="15" fill="#fff" textLength="234.6" lengthAdjust="spacingAndGlyphs" stroke="#fff" stroke-width="0.5">Effective Layer STP (with CIN)</text>
<line x1="881.0" y1="775.0" x2="1168.0" y2="775.0" stroke="#1458aa" stroke-width="2" stroke-dasharray="3.8 2.5"/>
<line x1="881.0" y1="760.0" x2="1168.0" y2="760.0" stroke="#1458aa" stroke-width="2" stroke-dasharray="3.8 2.5"/>
<line x1="881.0" y1="745.0" x2="1168.0" y2="745.0" stroke="#1458aa" stroke-width="2" stroke-dasharray="3.8 2.5"/>
<line x1="881.0" y1="731.0" x2="1168.0" y2="731.0" stroke="#1458aa" stroke-width="2" stroke-dasharray="3.8 2.5"/>
<line x1="881.0" y1="716.0" x2="1168.0" y2="716.0" stroke="#1458aa" stroke-width="2" stroke-dasharray="3.8 2.5"/>
<line x1="881.0" y1="701.0" x2="1168.0" y2="701.0" stroke="#1458aa" stroke-width="2" stroke-dasharray="3.8 2.5"/>
<line x1="881.0" y1="687.0" x2="1168.0" y2="687.0" stroke="#1458aa" stroke-width="2" stroke-dasharray="3.8 2.5"/>
<line x1="881.0" y1="672.0" x2="1168.0" y2="672.0" stroke="#1458aa" stroke-width="2" stroke-dasharray="3.8 2.5"/>
<line x1="881.0" y1="657.0" x2="1168.0" y2="657.0" stroke="#1458aa" stroke-width="2" stroke-dasharray="3.8 2.5"/>
<line x1="881.0" y1="643.0" x2="1168.0" y2="643.0" stroke="#1458aa" stroke-width="2" stroke-dasharray="3.8 2.5"/>
<line x1="881.0" y1="628.0" x2="1168.0" y2="628.0" stroke="#1458aa" stroke-width="2" stroke-dasharray="3.8 2.5"/>
<line x1="881.0" y1="614.0" x2="1168.0" y2="614.0" stroke="#1458aa" stroke-width="2" stroke-dasharray="3.8 2.5"/>
<text x="891.0" y="781.4" font-size="14.8" fill="#fff" text-anchor="middle" textLength="7.6" lengthAdjust="spacingAndGlyphs" stroke="#fff" stroke-width="0.3">0</text>
<text x="891.0" y="766.4" font-size="14.8" fill="#fff" text-anchor="middle" textLength="7.6" lengthAdjust="spacingAndGlyphs" stroke="#fff" stroke-width="0.3">1</text>
<text x="891.0" y="751.4" font-size="14.8" fill="#fff" text-anchor="middle" textLength="7.6" lengthAdjust="spacingAndGlyphs" stroke="#fff" stroke-width="0.3">2</text>
<text x="891.0" y="737.4" font-size="14.8" fill="#fff" text-anchor="middle" textLength="7.6" lengthAdjust="spacingAndGlyphs" stroke="#fff" stroke-width="0.3">3</text>
<text x="891.0" y="722.4" font-size="14.8" fill="#fff" text-anchor="middle" textLength="7.6" lengthAdjust="spacingAndGlyphs" stroke="#fff" stroke-width="0.3">4</text>
<text x="891.0" y="707.4" font-size="14.8" fill="#fff" text-anchor="middle" textLength="7.6" lengthAdjust="spacingAndGlyphs" stroke="#fff" stroke-width="0.3">5</text>
<text x="891.0" y="693.4" font-size="14.8" fill="#fff" text-anchor="middle" textLength="7.6" lengthAdjust="spacingAndGlyphs" stroke="#fff" stroke-width="0.3">6</text>
<text x="891.0" y="678.4" font-size="14.8" fill="#fff" text-anchor="middle" textLength="7.6" lengthAdjust="spacingAndGlyphs" stroke="#fff" stroke-width="0.3">7</text>
<text x="891.0" y="663.4" font-size="14.8" fill="#fff" text-anchor="middle" textLength="7.6" lengthAdjust="spacingAndGlyphs" stroke="#fff" stroke-width="0.3">8</text>
<text x="891.0" y="649.4" font-size="14.8" fill="#fff" text-anchor="middle" textLength="7.6" lengthAdjust="spacingAndGlyphs" stroke="#fff" stroke-width="0.3">9</text>
<text x="891.0" y="634.4" font-size="14.8" fill="#fff" text-anchor="middle" textLength="14.6" lengthAdjust="spacingAndGlyphs" stroke="#fff" stroke-width="0.3">10</text>
<text x="891.0" y="620.4" font-size="14.8" fill="#fff" text-anchor="middle" textLength="14.6" lengthAdjust="spacingAndGlyphs" stroke="#fff" stroke-width="0.3">11</text>
<line x1="882.0" y1="705.0" x2="1168.0" y2="705.0" stroke="#e00000" stroke-width="1.8"/>
<line x1="922.0" y1="613.0" x2="922.0" y2="653.0" stroke="#00ff00" stroke-width="2"/>
<line x1="922.0" y1="736.0" x2="922.0" y2="757.5" stroke="#00ff00" stroke-width="2"/>
<rect x="911.0" y="653.0" width="21.0" height="83.0" fill="none" stroke="#00ff00" stroke-width="2"/>
<line x1="911.0" y1="697.0" x2="932.0" y2="697.0" stroke="#00ff00" stroke-width="2"/>
<line x1="963.0" y1="651.0" x2="963.0" y2="709.0" stroke="#00ff00" stroke-width="2"/>
<line x1="963.0" y1="759.5" x2="963.0" y2="772.0" stroke="#00ff00" stroke-width="2"/>
<rect x="953.0" y="709.0" width="20.0" height="50.5" fill="none" stroke="#00ff00" stroke-width="2"/>
<line x1="953.0" y1="739.0" x2="973.0" y2="739.0" stroke="#00ff00" stroke-width="2"/>
<line x1="1004.0" y1="692.0" x2="1004.0" y2="720.0" stroke="#00ff00" stroke-width="2"/>
<line x1="1004.0" y1="765.5" x2="1004.0" y2="775.0" stroke="#00ff00" stroke-width="2"/>
<rect x="994.0" y="720.0" width="21.0" height="45.5" fill="none" stroke="#00ff00" stroke-width="2"/>
<line x1="994.0" y1="749.5" x2="1015.0" y2="749.5" stroke="#00ff00" stroke-width="2"/>
<line x1="1046.0" y1="708.5" x2="1046.0" y2="736.0" stroke="#00ff00" stroke-width="2"/>
<line x1="1046.0" y1="770.0" x2="1046.0" y2="775.0" stroke="#00ff00" stroke-width="2"/>
<rect x="1035.0" y="736.0" width="22.0" height="34.0" fill="none" stroke="#00ff00" stroke-width="2"/>
<line x1="1035.0" y1="756.5" x2="1057.0" y2="756.5" stroke="#00ff00" stroke-width="2"/>
<line x1="1087.0" y1="719.5" x2="1087.0" y2="745.0" stroke="#00ff00" stroke-width="2"/>
<line x1="1087.0" y1="772.5" x2="1087.0" y2="775.0" stroke="#00ff00" stroke-width="2"/>
<rect x="1076.0" y="745.0" width="22.0" height="27.5" fill="none" stroke="#00ff00" stroke-width="2"/>
<line x1="1076.0" y1="763.0" x2="1098.0" y2="763.0" stroke="#00ff00" stroke-width="2"/>
<line x1="1128.0" y1="749.0" x2="1128.0" y2="763.5" stroke="#00ff00" stroke-width="2"/>
<line x1="1128.0" y1="775.0" x2="1128.0" y2="775.0" stroke="#00ff00" stroke-width="2"/>
<rect x="1118.0" y="763.5" width="21.0" height="11.5" fill="none" stroke="#00ff00" stroke-width="2"/>
<line x1="1118.0" y1="771.5" x2="1139.0" y2="771.5" stroke="#00ff00" stroke-width="2"/>
<text x="922.0" y="786.6" font-size="10" fill="#fff" text-anchor="middle" stroke="#fff" stroke-width="0.3">EF4+</text>
<text x="963.0" y="786.6" font-size="10" fill="#fff" text-anchor="middle" stroke="#fff" stroke-width="0.3">EF3</text>
<text x="1004.0" y="786.6" font-size="10" fill="#fff" text-anchor="middle" stroke="#fff" stroke-width="0.3">EF2</text>
<text x="1046.0" y="786.6" font-size="10" fill="#fff" text-anchor="middle" stroke="#fff" stroke-width="0.3">EF1</text>
<text x="1087.0" y="786.6" font-size="10" fill="#fff" text-anchor="middle" stroke="#fff" stroke-width="0.3">EF0</text>
<text x="1107.0" y="786.6" font-size="10" fill="#fff" textLength="43.6" lengthAdjust="spacingAndGlyphs" stroke="#fff" stroke-width="0.3">NONTOR</text>
<rect x="1024.4" y="614.0" width="141.6" height="88.4" fill="#000" stroke="#fff" stroke-width="1.8"/>
<line x1="1024.4" y1="636.6" x2="1166.0" y2="636.6" stroke="#fff" stroke-width="1.6"/>
<text x="1028.6" y="624.9" font-size="9.6" fill="#fff" textLength="130.9" lengthAdjust="spacingAndGlyphs" stroke="#fff" stroke-width="0.3">Prob EF2+ torn with supercell</text>
<text x="1028.6" y="635.5" font-size="9.6" fill="#fff" textLength="118.9" lengthAdjust="spacingAndGlyphs" stroke="#fff" stroke-width="0.3">Sample CLIMO = .15 sigtor</text>
<text x="1028.6" y="646.9" font-size="9.6" fill="#fff" textLength="70.9" lengthAdjust="spacingAndGlyphs" stroke="#fff" stroke-width="0.3">based on CAPE:</text>
<text x="1130.9" y="646.9" font-size="9.6" fill="#fff" textLength="19.7" lengthAdjust="spacingAndGlyphs" stroke="#fff" stroke-width="0.3">0.15</text>
<text x="1028.6" y="656.9" font-size="9.6" fill="#ffff00" textLength="62.4" lengthAdjust="spacingAndGlyphs" stroke="#ffff00" stroke-width="0.3">based on LCL:</text>
<text x="1130.9" y="656.9" font-size="9.6" fill="#ffff00" textLength="19.7" lengthAdjust="spacingAndGlyphs" stroke="#ffff00" stroke-width="0.3">0.19</text>
<text x="1028.6" y="666.9" font-size="9.6" fill="#ff0000" textLength="70.9" lengthAdjust="spacingAndGlyphs" stroke="#ff0000" stroke-width="0.3">based on ESRH:</text>
<text x="1130.9" y="666.9" font-size="9.6" fill="#ff0000" textLength="19.7" lengthAdjust="spacingAndGlyphs" stroke="#ff0000" stroke-width="0.3">0.38</text>
<text x="1028.6" y="676.9" font-size="9.6" fill="#ffff00" textLength="72.9" lengthAdjust="spacingAndGlyphs" stroke="#ffff00" stroke-width="0.3">based on EBWD:</text>
<text x="1130.9" y="676.9" font-size="9.6" fill="#ffff00" textLength="19.7" lengthAdjust="spacingAndGlyphs" stroke="#ffff00" stroke-width="0.3">0.19</text>
<text x="1028.6" y="686.9" font-size="9.6" fill="#ff0000" textLength="70.4" lengthAdjust="spacingAndGlyphs" stroke="#ff0000" stroke-width="0.3">based on STPC:</text>
<text x="1130.9" y="686.9" font-size="9.6" fill="#ff0000" textLength="19.7" lengthAdjust="spacingAndGlyphs" stroke="#ff0000" stroke-width="0.3">0.32</text>
<text x="1028.6" y="696.9" font-size="9.6" fill="#ffff00" textLength="89.9" lengthAdjust="spacingAndGlyphs" stroke="#ffff00" stroke-width="0.3">based on STP_fixed:</text>
<text x="1130.9" y="696.9" font-size="9.6" fill="#ffff00" textLength="19.7" lengthAdjust="spacingAndGlyphs" stroke="#ffff00" stroke-width="0.3">0.25</text>
</svg></body></html>
